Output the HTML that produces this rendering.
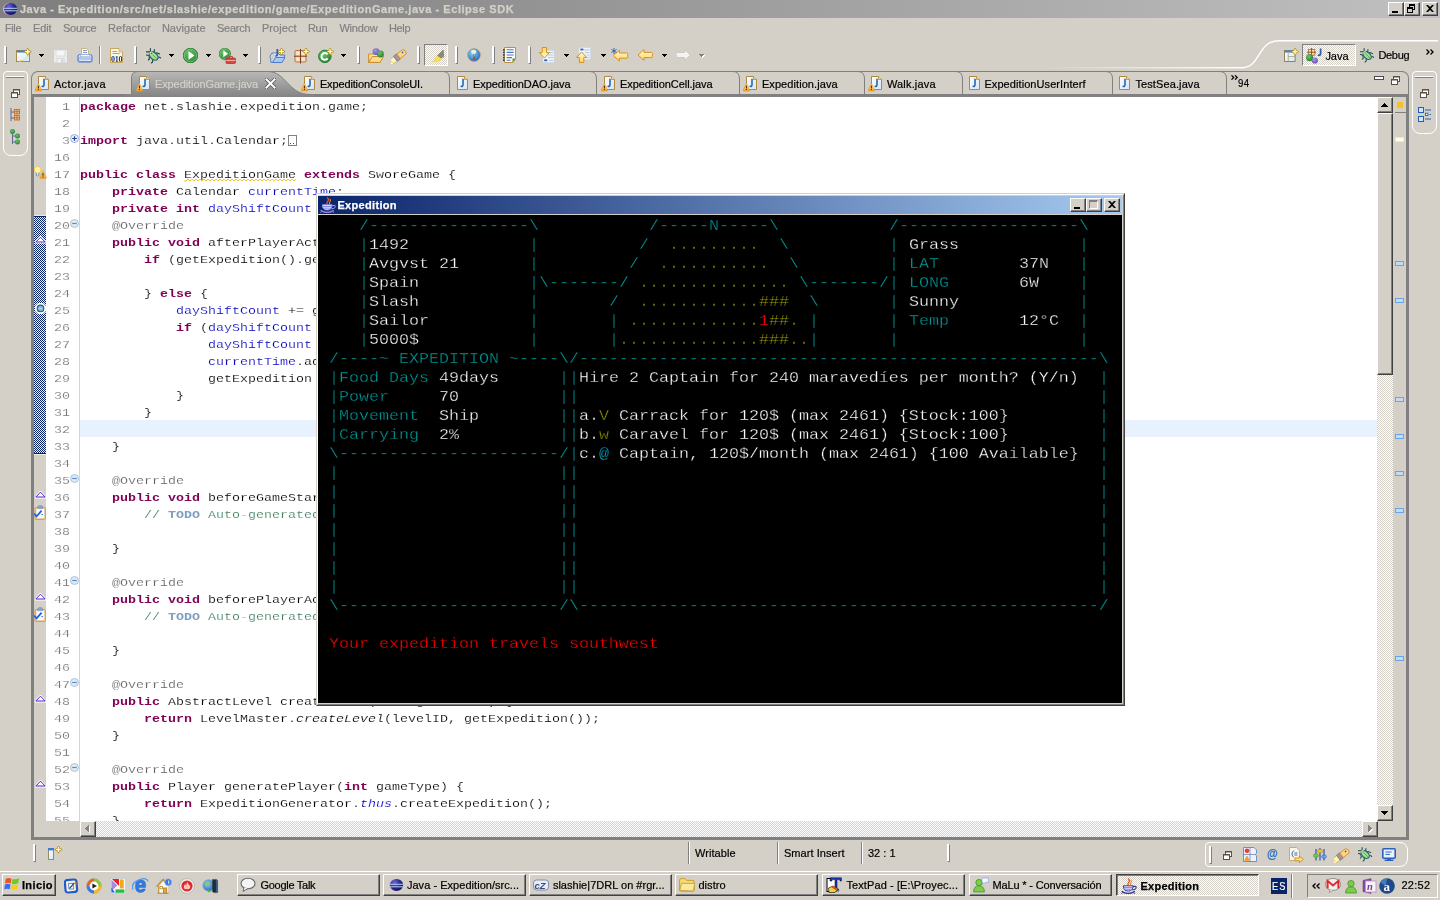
<!DOCTYPE html><html><head><meta charset="utf-8"><title>Eclipse</title><style>
*{box-sizing:border-box;margin:0;padding:0}
html,body{width:1440px;height:900px;overflow:hidden;background:#D4D0C8;}
body{position:relative;font-family:"Liberation Sans",sans-serif;font-size:11px;color:#000;}
.a{position:absolute;}
.t{position:absolute;white-space:pre;line-height:14px;height:14px;font-size:11px;-webkit-text-stroke:.2px;}
.code{position:absolute;white-space:pre;font-family:"Liberation Mono",monospace;font-size:13.333px;line-height:17px;height:17px;color:#000;transform:scaleY(.88);transform-origin:0 12px;-webkit-text-stroke:.18px #fff;}
.kw{color:#7F0055;font-weight:bold;-webkit-text-stroke:0;}
.fld{color:#0000C0;}
.ann{color:#646464;}
.cm{color:#3F7F5F;}
.todo{color:#7F9FBF;font-weight:bold;-webkit-text-stroke:0;}
.it{font-style:italic;}
.ln{position:absolute;white-space:pre;font-family:"Liberation Mono",monospace;font-size:13.333px;line-height:17px;height:17px;color:#787878;text-align:right;width:24px;left:46px;transform:scaleY(.88);transform-origin:0 12px;-webkit-text-stroke:.18px #fff;}
.g{position:absolute;white-space:pre;font-family:"Liberation Mono",monospace;font-size:16.667px;line-height:19px;height:19px;color:#FFFFFF;transform:scaleY(.9);transform-origin:50% 55%;-webkit-text-stroke:.35px #000;}
.te{color:#009A9A;}
.ol{color:#8C8C00;}
.oh{color:#A8A800;}
.rd{color:#FF0000;}
.cy{color:#00D0F0;}
.btn{position:absolute;background:#D4D0C8;border:1px solid;border-color:#fff #404040 #404040 #fff;box-shadow:inset -1px -1px 0 #808080, inset 1px 1px 0 #D4D0C8;}
.tb{position:absolute;height:22px;top:875px;background:#D4D0C8;border:1px solid;border-color:#fff #404040 #404040 #fff;box-shadow:inset -1px -1px 0 #808080;}
</style></head><body><div id="root" style="position:absolute;left:0;top:0;width:1440px;height:900px;overflow:hidden;will-change:transform">
<div class="a" style="left:0;top:0;width:1440px;height:18px;background:linear-gradient(90deg,#808080 0%,#808080 10%,#C0C0C0 100%);"></div>
<div class="t" style="left:19.90px;top:2px;color:#D4D0C8;font-weight:bold;-webkit-text-stroke:.25px;letter-spacing:0.549px;">Java - Expedition/src/net/slashie/expedition/game/ExpeditionGame.java - Eclipse SDK</div>
<svg class="a" style="left:2px;top:1px" width="16" height="16" viewBox="0 0 16 16"><defs><radialGradient id="ec" cx="0.35" cy="0.3" r="0.8"><stop offset="0" stop-color="#6A6AD0"/><stop offset=".5" stop-color="#2A2A90"/><stop offset="1" stop-color="#101050"/></radialGradient></defs><ellipse cx="7.4" cy="8" rx="6.4" ry="6" fill="#E8A8D8"/><ellipse cx="8.6" cy="8" rx="6.6" ry="6.1" fill="url(#ec)"/><rect x="2" y="6.8" width="13.2" height="1" fill="#B8D0F4"/><rect x="2" y="9.3" width="13.2" height="1" fill="#B8D0F4"/></svg>
<div class="btn" style="left:1388px;top:2px;width:16px;height:14px"></div><div class="a" style="left:1392px;top:11px;width:6px;height:2px;background:#000"></div>
<div class="btn" style="left:1404px;top:2px;width:16px;height:14px"></div><div class="a" style="left:1409px;top:4px;width:6px;height:6px;border:1px solid #000;border-top:2px solid #000"></div><div class="a" style="left:1407px;top:7px;width:6px;height:6px;border:1px solid #000;border-top:2px solid #000;background:#D4D0C8"></div>
<div class="btn" style="left:1422px;top:2px;width:16px;height:14px"></div><svg class="a" style="left:1426px;top:5px" width="8" height="7" viewBox="0 0 8 7"><path d="M0 0h2l2 2 2-2h2L5 3.5 8 7H6L4 5 2 7H0l3-3.5z" fill="#000"/></svg>
<div class="t" style="left:4.90px;top:21px;color:#808080;letter-spacing:-0.345px;">File</div>
<div class="t" style="left:32.90px;top:21px;color:#808080;letter-spacing:-0.090px;">Edit</div>
<div class="t" style="left:62.90px;top:21px;color:#808080;letter-spacing:-0.232px;">Source</div>
<div class="t" style="left:107.90px;top:21px;color:#808080;letter-spacing:0.160px;">Refactor</div>
<div class="t" style="left:161.90px;top:21px;color:#808080;letter-spacing:0.040px;">Navigate</div>
<div class="t" style="left:216.90px;top:21px;color:#808080;letter-spacing:-0.232px;">Search</div>
<div class="t" style="left:261.90px;top:21px;color:#808080;letter-spacing:0.075px;">Project</div>
<div class="t" style="left:307.90px;top:21px;color:#808080;letter-spacing:-0.244px;">Run</div>
<div class="t" style="left:339.40px;top:21px;color:#808080;letter-spacing:-0.185px;">Window</div>
<div class="t" style="left:388.90px;top:21px;color:#808080;letter-spacing:-0.308px;">Help</div>
<svg width="0" height="0" style="position:absolute"><defs>
<linearGradient id="gPage" x1="0" y1="0" x2="1" y2="1"><stop offset="0" stop-color="#fff"/><stop offset="1" stop-color="#D5E4F7"/></linearGradient>
<linearGradient id="gWarn" x1="0" y1="0" x2="0" y2="1"><stop offset="0" stop-color="#FFF3B0"/><stop offset="1" stop-color="#F2A024"/></linearGradient>
<radialGradient id="gGreen" cx="0.4" cy="0.35" r="0.75"><stop offset="0" stop-color="#6CC56C"/><stop offset="1" stop-color="#1F7A2A"/></radialGradient>
<radialGradient id="gPurp" cx="0.4" cy="0.35" r="0.75"><stop offset="0" stop-color="#A79CE0"/><stop offset="1" stop-color="#5A48A8"/></radialGradient>
<linearGradient id="gArrow" x1="0" y1="0" x2="0" y2="1"><stop offset="0" stop-color="#FFFBE0"/><stop offset="1" stop-color="#FFD75A"/></linearGradient>
<linearGradient id="gFolder" x1="0" y1="0" x2="0" y2="1"><stop offset="0" stop-color="#FFF0B8"/><stop offset="1" stop-color="#F3C25A"/></linearGradient>
<linearGradient id="gWin" x1="0" y1="0" x2="1" y2="1"><stop offset="0" stop-color="#fff"/><stop offset="1" stop-color="#CFE8FB"/></linearGradient>
<linearGradient id="gPrn" x1="0" y1="0" x2="0" y2="1"><stop offset="0" stop-color="#E6EEFB"/><stop offset="1" stop-color="#7C9EDA"/></linearGradient>
<radialGradient id="gGlobe" cx="0.4" cy="0.35" r="0.75"><stop offset="0" stop-color="#8FD0F5"/><stop offset="1" stop-color="#1E5FB8"/></radialGradient>
<pattern id="dith" width="2" height="2" patternUnits="userSpaceOnUse"><rect width="2" height="2" fill="#fff"/><rect width="1" height="1" fill="#D4D0C8"/><rect x="1" y="1" width="1" height="1" fill="#D4D0C8"/></pattern>
</defs></svg>
<div class="a" style="left:4px;top:46px;width:3px;height:18px;background:#fff;border-left:1px solid #fff;border-right:1px solid #808080;border-top:1px solid #fff;border-bottom:1px solid #808080"></div>
<div class="a" style="left:134px;top:46px;width:3px;height:18px;background:#fff;border-left:1px solid #fff;border-right:1px solid #808080;border-top:1px solid #fff;border-bottom:1px solid #808080"></div>
<div class="a" style="left:258px;top:46px;width:3px;height:18px;background:#fff;border-left:1px solid #fff;border-right:1px solid #808080;border-top:1px solid #fff;border-bottom:1px solid #808080"></div>
<div class="a" style="left:357px;top:46px;width:3px;height:18px;background:#fff;border-left:1px solid #fff;border-right:1px solid #808080;border-top:1px solid #fff;border-bottom:1px solid #808080"></div>
<div class="a" style="left:417px;top:46px;width:3px;height:18px;background:#fff;border-left:1px solid #fff;border-right:1px solid #808080;border-top:1px solid #fff;border-bottom:1px solid #808080"></div>
<div class="a" style="left:455px;top:46px;width:3px;height:18px;background:#fff;border-left:1px solid #fff;border-right:1px solid #808080;border-top:1px solid #fff;border-bottom:1px solid #808080"></div>
<div class="a" style="left:492px;top:46px;width:3px;height:18px;background:#fff;border-left:1px solid #fff;border-right:1px solid #808080;border-top:1px solid #fff;border-bottom:1px solid #808080"></div>
<div class="a" style="left:528px;top:46px;width:3px;height:18px;background:#fff;border-left:1px solid #fff;border-right:1px solid #808080;border-top:1px solid #fff;border-bottom:1px solid #808080"></div>
<div class="a" style="left:99px;top:46px;width:2px;height:18px;border-left:1px solid #808080;border-right:1px solid #fff"></div>
<svg class="a" style="left:16px;top:47.5px" width="16" height="16" viewBox="0 0 16 16" ><rect x=".5" y="2.5" width="13" height="11" fill="url(#gWin)" stroke="#A88A4A"/><rect x="1" y="2.5" width="12" height="2" fill="#3C7CD0"/><path d="M12.5 5 Q12 12 3 13.2" fill="none" stroke="#FFD84A" stroke-width="1"/><g transform="translate(8.2 0.2)"><path d="M3.5 -.2 L4.8 2.2 L7.2 3.5 L4.8 4.8 L3.5 7.2 L2.2 4.8 L-.2 3.5 L2.2 2.2 Z" fill="#D4AA22" stroke="#B08A18" stroke-width=".7"/><path d="M3.5 1 V6 M1 3.5 H6" stroke="#FFFBE0" stroke-width="1.2"/></g></svg>
<svg class="a" style="left:39px;top:54px" width="5" height="3" viewBox="0 0 5 3" shape-rendering="crispEdges"><path d="M0 0h5v1h-1v1h-1v1h-1v-1h-1v-1h-1z" fill="#000"/></svg>
<svg class="a" style="left:53px;top:48.5px" width="15" height="15" viewBox="0 0 15 15" ><rect x=".5" y=".5" width="14" height="13.5" fill="#ECECEC" stroke="#CFCFCF"/><rect x="3" y="1" width="9" height="6" fill="#F6F6F6" stroke="#CFCFCF" stroke-width=".6"/><rect x="4" y="9.5" width="7" height="4.5" fill="#F2F2F2" stroke="#C8C8C8" stroke-width=".6"/><rect x="8" y="10.5" width="2" height="3" fill="#D0D0D0"/></svg>
<svg class="a" style="left:77px;top:48px" width="16" height="15" viewBox="0 0 16 15" ><path d="M4.5 .5 H9.5 L11.5 2.5 V7.5 H4.5 Z" fill="#FFFAE8" stroke="#C8A85A" stroke-width=".8"/><path d="M6 2.5 H10 M6 4.5 H10" stroke="#5A80CC" stroke-width=".8"/><path d="M1 8 Q1 6.6 2.4 6.6 H13.6 Q15 6.6 15 8 V12.6 Q15 14 13.6 14 H2.4 Q1 14 1 12.6 Z" fill="url(#gPrn)" stroke="#4A74C8" stroke-width="1"/><rect x="3.4" y="6.4" width="9.2" height="2.4" fill="#FFFAE8" stroke="#8AA4D8" stroke-width=".6"/><rect x="2" y="11.4" width="12" height="1.6" rx=".6" fill="#D8E4F8"/></svg>
<svg class="a" style="left:110px;top:47.5px" width="13" height="15" viewBox="0 0 13 15" ><path d="M.5 .5 H9 L12.5 4 V14.5 H.5 Z" fill="#FBF6E6" stroke="#C8A85A"/><path d="M9 .5 V4 H12.5" fill="#F0D898" stroke="#C8A85A" stroke-width=".8"/><path d="M2.5 3.5 H7 M2.5 5.5 H9.5" stroke="#6A8CD0" stroke-width=".8"/><text x="1" y="13.8" font-family="Liberation Serif" font-weight="bold" font-size="8" fill="#1E3A78" letter-spacing="-.3">010</text></svg>
<svg class="a" style="left:146px;top:47.5px" width="16" height="16" viewBox="0 0 16 16" ><g stroke="#1A4A3A" stroke-width="1.1" fill="none" stroke-linecap="round"><path d="M4.4 .6 V4 M8.5 1.6 L8.2 3.8 L7 4.4 M.2 3.9 H4 M.2 7 L2 7.2 L3.2 8.2 L3.4 11 L2.4 12 M6.6 11.6 V14 L5.4 15 M10.2 4.9 L12 5.2 L13.6 6 M12.2 9 L13.6 9.2 L14.6 10"/></g><ellipse cx="7.7" cy="8" rx="5" ry="3.3" transform="rotate(42 7.7 8)" fill="#A8DC88" stroke="#1E6A8A" stroke-width="1.3"/><path d="M6.6 6.6 L10.6 10.6" stroke="#58A848" stroke-width="1"/><circle cx="5" cy="5" r="1.5" fill="#E8F8D0"/><circle cx="5.4" cy="5.4" r=".8" fill="#2A7A1E"/></svg>
<svg class="a" style="left:169px;top:54px" width="5" height="3" viewBox="0 0 5 3" shape-rendering="crispEdges"><path d="M0 0h5v1h-1v1h-1v1h-1v-1h-1v-1h-1z" fill="#000"/></svg>
<svg class="a" style="left:183px;top:47.5px" width="15" height="15" viewBox="0 0 15 15" ><circle cx="7.5" cy="7.5" r="7.3" fill="url(#gGreen)" stroke="#1E7A28" stroke-width=".8"/><circle cx="7.5" cy="7.5" r="6.1" fill="none" stroke="#8FD88F" stroke-width=".8" opacity=".8"/><path d="M5.5 3.2 L11.6 7.5 L5.5 11.8 Z" fill="#fff"/></svg>
<svg class="a" style="left:206px;top:54px" width="5" height="3" viewBox="0 0 5 3" shape-rendering="crispEdges"><path d="M0 0h5v1h-1v1h-1v1h-1v-1h-1v-1h-1z" fill="#000"/></svg>
<svg class="a" style="left:219px;top:47.5px" width="17" height="16" viewBox="0 0 17 16" ><g transform="scale(.78)"><circle cx="7.5" cy="7.5" r="7.3" fill="url(#gGreen)" stroke="#1E7A28" stroke-width=".8"/><circle cx="7.5" cy="7.5" r="6.1" fill="none" stroke="#8FD88F" stroke-width=".8" opacity=".8"/><path d="M5.5 3.2 L11.6 7.5 L5.5 11.8 Z" fill="#fff"/></g><rect x="7" y="10" width="9.5" height="5.5" rx="1" fill="#D64A42" stroke="#B02A26" stroke-width=".7"/><path d="M10 10 V8.6 H13.5 V10" fill="none" stroke="#C03A34" stroke-width="1"/><rect x="7" y="12" width="9.5" height="1" fill="#F2A8A0"/></svg>
<svg class="a" style="left:243px;top:54px" width="5" height="3" viewBox="0 0 5 3" shape-rendering="crispEdges"><path d="M0 0h5v1h-1v1h-1v1h-1v-1h-1v-1h-1z" fill="#000"/></svg>
<svg class="a" style="left:269px;top:47.5px" width="17" height="16" viewBox="0 0 17 16" ><path d="M1 8 L3 5 H9 L11 7 H16 L13 14.5 H2 Z" fill="#BFD8F5" stroke="#4A74C8" stroke-width=".9"/><path d="M3.5 14.5 L6.5 9.5 H16 L13 14.5 Z" fill="#A9CBF2" stroke="#4A74C8" stroke-width=".9"/><path d="M2 8 V12 L5 5.5 H9" fill="#FFF4D0" stroke="#D8B060" stroke-width=".6"/><path d="M8.3 1 V6.4 Q8.3 8 6.4 7.8" fill="none" stroke="#2B5FB0" stroke-width="1.7"/><g transform="translate(9 0)"><path d="M3.5 -.2 L4.8 2.2 L7.2 3.5 L4.8 4.8 L3.5 7.2 L2.2 4.8 L-.2 3.5 L2.2 2.2 Z" fill="#D4AA22" stroke="#B08A18" stroke-width=".7"/><path d="M3.5 1 V6 M1 3.5 H6" stroke="#FFFBE0" stroke-width="1.2"/></g></svg>
<svg class="a" style="left:294px;top:47.5px" width="16" height="16" viewBox="0 0 16 16" ><rect x="1" y="2.5" width="11" height="11.5" rx="1" fill="#F3D5A8" stroke="#B87848" stroke-width="1"/><path d="M6.5 1 V15.5 M0 8.2 H13" stroke="#7A3A20" stroke-width="1"/><rect x="2.4" y="4" width="3" height="3" fill="#FBE8C8"/><rect x="7.8" y="4" width="3" height="3" fill="#FBE8C8"/><rect x="2.4" y="9.6" width="3" height="3" fill="#FBE8C8"/><rect x="7.8" y="9.6" width="3" height="3" fill="#FBE8C8"/><g transform="translate(8.5 0)"><path d="M3.5 -.2 L4.8 2.2 L7.2 3.5 L4.8 4.8 L3.5 7.2 L2.2 4.8 L-.2 3.5 L2.2 2.2 Z" fill="#D4AA22" stroke="#B08A18" stroke-width=".7"/><path d="M3.5 1 V6 M1 3.5 H6" stroke="#FFFBE0" stroke-width="1.2"/></g></svg>
<svg class="a" style="left:318px;top:47.5px" width="16" height="16" viewBox="0 0 16 16" ><circle cx="6.8" cy="8.4" r="6.3" fill="url(#gGreen)" stroke="#1E7A28" stroke-width=".8"/><path d="M9.6 6.4 A3.4 3.4 0 1 0 9.6 10.4" fill="none" stroke="#fff" stroke-width="2"/><g transform="translate(8.6 0)"><path d="M3.5 -.2 L4.8 2.2 L7.2 3.5 L4.8 4.8 L3.5 7.2 L2.2 4.8 L-.2 3.5 L2.2 2.2 Z" fill="#D4AA22" stroke="#B08A18" stroke-width=".7"/><path d="M3.5 1 V6 M1 3.5 H6" stroke="#FFFBE0" stroke-width="1.2"/></g></svg>
<svg class="a" style="left:341px;top:54px" width="5" height="3" viewBox="0 0 5 3" shape-rendering="crispEdges"><path d="M0 0h5v1h-1v1h-1v1h-1v-1h-1v-1h-1z" fill="#000"/></svg>
<svg class="a" style="left:368px;top:47.5px" width="16" height="15" viewBox="0 0 16 15" ><path d="M.6 6 H6 L7.5 4.5 H12.5 V6.5 H15.5 L12 14.5 H.6 Z" fill="url(#gFolder)" stroke="#C8862A" stroke-width=".9"/><path d="M.8 14.3 L4.5 8.5 H15.6 L12 14.5 Z" fill="#FBDD8A" stroke="#C8862A" stroke-width=".9"/><circle cx="8" cy="3.6" r="3.4" fill="url(#gPurp)"/><circle cx="12.4" cy="6" r="3.4" fill="url(#gGreen)"/></svg>
<svg class="a" style="left:391px;top:47.5px" width="16" height="16" viewBox="0 0 16 16" ><g transform="rotate(-38 8 8)"><rect x="-1.5" y="5.2" width="5" height="5.6" fill="#FFF6B0" stroke="#C8A03A" stroke-width=".6"/><path d="M-1.5 5.2 L-3 4.2 V11.8 L-1.5 10.8 Z" fill="#FFFDE8"/><rect x="3.5" y="4.8" width="4" height="6.4" fill="#9C98A8" stroke="#6E6A7A" stroke-width=".6"/><path d="M7.5 5.2 H15 Q17.5 8 15 10.8 H7.5 Z" fill="#F9D48A" stroke="#D8922A" stroke-width=".9"/><circle cx="13" cy="7.4" r=".8" fill="#2B4FA0"/></g></svg>
<div class="a" style="left:424px;top:44px;width:24px;height:22px;border:1px solid;border-color:#808080 #fff #fff #808080;background:#EAE8E4;background-image:repeating-conic-gradient(#fff 0 25%,#D4D0C8 0 50%);background-size:2px 2px"></div>
<svg class="a" style="left:428px;top:48px" width="16" height="16" viewBox="0 0 16 16" ><path d="M3 13.5 H9" stroke="#F7E24A" stroke-width="1.4"/><path d="M6 12.5 L9.5 7.5 L13.2 10 L11.5 13 Z" fill="#F7E24A" stroke="#E8C82A" stroke-width=".5"/><path d="M9.5 7.5 L15.2 2 L15.8 8.6 L13.2 10 Z" fill="#8E8A7A" stroke="#6E6A5A" stroke-width=".5"/></svg>
<svg class="a" style="left:467px;top:48px" width="14" height="14" viewBox="0 0 14 14" ><circle cx="7" cy="7" r="6.4" fill="url(#gGlobe)" stroke="#B89A4A" stroke-width=".5"/><path d="M4 2.5 Q7 1 9 2.6 Q10 5 7.8 6 Q5 6.4 4.4 4.4 Z" fill="#F4F4E0" opacity=".9"/><path d="M6 5 L7.5 8.6 L9 6.5 L8.4 9.8 H6.5 Z" fill="#5A9A3A"/><circle cx="7" cy="10.4" r=".9" fill="#C82020"/></svg>
<svg class="a" style="left:503px;top:47px" width="13" height="16" viewBox="0 0 13 16" ><path d="M1.5 .5 H12.5 V12 L10 15.5 H1.5 Z" fill="#FEFCF0" stroke="#B8923C" stroke-width="1"/><path d="M12.5 11.5 L9.5 15.5 V11.5 Z" fill="#3C9A4A"/><g fill="#1E3A78"><rect x="0" y="2" width="1.6" height="1.6"/><rect x="0" y="4.6" width="1.6" height="1.6"/><rect x="0" y="7.2" width="1.6" height="1.6"/><rect x="0" y="9.8" width="1.6" height="1.6"/><rect x="0" y="12.4" width="1.6" height="1.6"/></g><g stroke="#4A78C8" stroke-width="1.1"><path d="M3.6 2.8 H10.6 M3.6 5.4 H10.6 M3.6 8 H10.6 M3.6 10.6 H9 M3.6 13.2 H7.6"/></g></svg>
<svg class="a" style="left:539px;top:47px" width="16" height="16" viewBox="0 0 16 16" ><rect x="4" y="3.5" width="11" height="12" fill="#EEF3FB" stroke="#C8D4E8" stroke-width=".6"/><path d="M9 5.5 H14 M9 8 H14 M9 10.5 H14" stroke="#B8C8E0" stroke-width="1"/><rect x="5.2" y="12.4" width="3" height="1.8" fill="#2B5FB0"/><path d="M10 13.4 H14" stroke="#B8C8E0"/><g transform="translate(0.4 11) scale(1 -1)"><path d="M5 0 L10 5.4 H7.2 V10.5 H2.8 V5.4 H0 Z" fill="url(#gArrow)" stroke="#D8901E" stroke-width="1" stroke-linejoin="round"/></g></svg>
<svg class="a" style="left:564px;top:54px" width="5" height="3" viewBox="0 0 5 3" shape-rendering="crispEdges"><path d="M0 0h5v1h-1v1h-1v1h-1v-1h-1v-1h-1z" fill="#000"/></svg>
<svg class="a" style="left:576px;top:47px" width="16" height="16" viewBox="0 0 16 16" ><rect x="3" y=".5" width="11.5" height="12" fill="#EEF3FB" stroke="#C8D4E8" stroke-width=".6"/><path d="M8 3 H13.5 M9 5.5 H13.5 M10.5 8 H13.5 M10.5 10.5 H13.5" stroke="#B8C8E0" stroke-width="1"/><rect x="4.4" y="1.6" width="3" height="1.8" fill="#2B5FB0"/><g transform="translate(0.6 5)"><path d="M5 0 L10 5.4 H7.2 V10.5 H2.8 V5.4 H0 Z" fill="url(#gArrow)" stroke="#D8901E" stroke-width="1" stroke-linejoin="round"/></g></svg>
<svg class="a" style="left:601px;top:54px" width="5" height="3" viewBox="0 0 5 3" shape-rendering="crispEdges"><path d="M0 0h5v1h-1v1h-1v1h-1v-1h-1v-1h-1z" fill="#000"/></svg>
<svg class="a" style="left:611px;top:47.5px" width="18" height="14" viewBox="0 0 18 14" ><g transform="translate(2.4 1.6)"><path d="M0 6 L6 .6 V3.4 H13.4 Q14.4 3.4 14.4 4.4 V7.6 Q14.4 8.6 13.4 8.6 H6 V11.4 Z" fill="url(#gArrow)" stroke="#D8901E" stroke-width="1" stroke-linejoin="round"/></g><path d="M3 0 V6 M.4 1.5 L5.6 4.5 M.4 4.5 L5.6 1.5" stroke="#2B5FB0" stroke-width=".9"/></svg>
<svg class="a" style="left:638px;top:49px" width="15" height="12" viewBox="0 0 15 12" ><path d="M0 6 L6 .6 V3.4 H13.4 Q14.4 3.4 14.4 4.4 V7.6 Q14.4 8.6 13.4 8.6 H6 V11.4 Z" fill="url(#gArrow)" stroke="#D8901E" stroke-width="1" stroke-linejoin="round"/></svg>
<svg class="a" style="left:662px;top:54px" width="5" height="3" viewBox="0 0 5 3" shape-rendering="crispEdges"><path d="M0 0h5v1h-1v1h-1v1h-1v-1h-1v-1h-1z" fill="#000"/></svg>
<svg class="a" style="left:676px;top:49px" width="15" height="12" viewBox="0 0 15 12" ><g transform="translate(14.5 0) scale(-1 1)"><path d="M0 6 L6 .6 V3.4 H13.4 Q14.4 3.4 14.4 4.4 V7.6 Q14.4 8.6 13.4 8.6 H6 V11.4 Z" fill="#F4F3F0" stroke="#C8C6C0" stroke-width="1" stroke-linejoin="round"/></g></svg>
<svg class="a" style="left:700px;top:55px" width="5" height="3" viewBox="0 0 5 3" shape-rendering="crispEdges"><path d="M0 0h5v1h-1v1h-1v1h-1v-1h-1v-1h-1z" fill="#fff"/></svg>
<svg class="a" style="left:699px;top:54px" width="5" height="3" viewBox="0 0 5 3" shape-rendering="crispEdges"><path d="M0 0h5v1h-1v1h-1v1h-1v-1h-1v-1h-1z" fill="#808080"/></svg>
<svg class="a" style="left:1040px;top:38px" width="400" height="32" viewBox="0 0 400 32"><defs><linearGradient id="pf" x1="0" x2="1"><stop offset="0" stop-color="#D4D0C8"/><stop offset="1" stop-color="#fff"/></linearGradient></defs><rect x="0" y="29" width="203" height="1.4" fill="url(#pf)"/><path d="M202 29.7 C221 29.7 217 2.7 239 2.7 H398" fill="none" stroke="#fff" stroke-width="1.4"/></svg>
<svg class="a" style="left:1284px;top:48px" width="15" height="15" viewBox="0 0 15 15" ><rect x=".5" y="2.5" width="10.6" height="11" fill="url(#gWin)" stroke="#8A7A4A" stroke-width=".9"/><rect x=".9" y="2.6" width="9.8" height="2" fill="#4A84D8"/><path d="M4.2 5 V13.4 M4.2 8.6 H11" stroke="#A89A6A" stroke-width=".8"/><g transform="translate(7.6 0.2)"><path d="M3.5 -.2 L4.8 2.2 L7.2 3.5 L4.8 4.8 L3.5 7.2 L2.2 4.8 L-.2 3.5 L2.2 2.2 Z" fill="#D4AA22" stroke="#B08A18" stroke-width=".7"/><path d="M3.5 1 V6 M1 3.5 H6" stroke="#FFFBE0" stroke-width="1.2"/></g></svg>
<div class="a" style="left:1302px;top:44px;width:54px;height:22px;border:1px solid;border-color:#808080 #fff #fff #808080;background:#EAE8E4;background-image:repeating-conic-gradient(#fff 0 25%,#D4D0C8 0 50%);background-size:2px 2px"></div>
<svg class="a" style="left:1305px;top:48px" width="18" height="16" viewBox="0 0 18 16" ><rect x="3.4" y="1.4" width="6.4" height="5.8" fill="#FBE3B0" stroke="#B8704A" stroke-width=".9"/><path d="M6.6 0 V8 M2.2 4.2 H11" stroke="#9A4A28" stroke-width="1"/><path d="M15.6 .4 V5.6 Q15.6 7.6 13.4 7.2 L12.8 7" fill="none" stroke="#2B66AC" stroke-width="1.8"/><circle cx="4.6" cy="9.6" r="3.6" fill="url(#gGreen)"/><circle cx="9.8" cy="12.5" r="3.1" fill="url(#gPurp)"/></svg>
<div class="t" style="left:1325.40px;top:49px;color:#000;letter-spacing:-0.017px;">Java</div>
<svg class="a" style="left:1360px;top:48px" width="15" height="15" viewBox="0 0 16 16" ><g stroke="#1A4A3A" stroke-width="1.1" fill="none" stroke-linecap="round"><path d="M4.4 .6 V4 M8.5 1.6 L8.2 3.8 L7 4.4 M.2 3.9 H4 M.2 7 L2 7.2 L3.2 8.2 L3.4 11 L2.4 12 M6.6 11.6 V14 L5.4 15 M10.2 4.9 L12 5.2 L13.6 6 M12.2 9 L13.6 9.2 L14.6 10"/></g><ellipse cx="7.7" cy="8" rx="5" ry="3.3" transform="rotate(42 7.7 8)" fill="#A8DC88" stroke="#1E6A8A" stroke-width="1.3"/><path d="M6.6 6.6 L10.6 10.6" stroke="#58A848" stroke-width="1"/><circle cx="5" cy="5" r="1.5" fill="#E8F8D0"/><circle cx="5.4" cy="5.4" r=".8" fill="#2A7A1E"/></svg>
<div class="t" style="left:1378.40px;top:48px;color:#000;letter-spacing:-0.305px;">Debug</div>
<svg class="a" style="left:1426px;top:49px" width="9" height="6" viewBox="0 0 9 6"><path d="M.5 .5 L3 3 L.5 5.5 M4.5 .5 L7 3 L4.5 5.5" fill="none" stroke="#000" stroke-width="1.3"/></svg>
<div class="a" style="left:3px;top:71px;width:25px;height:85px;border:1.5px solid #fff;border-radius:4px 4px 8px 8px"></div>
<div class="a" style="left:6px;top:76px;width:18px;height:2px;border-top:1px solid #fff;border-bottom:1px solid #808080"></div>
<svg class="a" style="left:11px;top:89px" width="9" height="9" viewBox="0 0 9 9" ><rect x="2.5" y=".5" width="6" height="5" fill="#fff" stroke="#5A5048" stroke-width="1"/><rect x="2.5" y=".5" width="6" height="1" fill="#5A5048"/><rect x=".5" y="3.5" width="6" height="5" fill="#fff" stroke="#5A5048" stroke-width="1"/><rect x=".5" y="3.5" width="6" height="1" fill="#5A5048"/></svg>
<svg class="a" style="left:10px;top:108px" width="10" height="14" viewBox="0 0 10 14" ><path d="M1 0 V13 M1 4 H4 M1 10 H4" stroke="#5A6A9A" stroke-width="1" fill="none"/><g fill="#F5C88A" stroke="#B8601E" stroke-width=".8"><rect x="4.5" y="1.5" width="5" height="4.4"/><rect x="4.5" y="7.6" width="5" height="4.4"/></g><path d="M7 1.5 V5.9 M4.5 3.7 H9.5 M7 7.6 V12 M4.5 9.8 H9.5" stroke="#B8601E" stroke-width=".8"/></svg>
<svg class="a" style="left:10px;top:129px" width="10" height="16" viewBox="0 0 10 16" ><path d="M2.5 3 V15 M2.5 7 H6 M2.5 13 H6" stroke="#5A6A9A" stroke-width="1" fill="none"/><circle cx="2.5" cy="2.5" r="2.3" fill="url(#gGreen)" stroke="#2E8A3A" stroke-width=".5"/><circle cx="7.5" cy="7" r="2.3" fill="url(#gGreen)" stroke="#2E8A3A" stroke-width=".5"/><circle cx="7.5" cy="13" r="2.3" fill="url(#gGreen)" stroke="#2E8A3A" stroke-width=".5"/></svg>
<div class="a" style="left:1412px;top:71px;width:25px;height:63px;border:1.5px solid #fff;border-radius:4px 4px 8px 8px"></div>
<div class="a" style="left:1415px;top:76px;width:18px;height:2px;border-top:1px solid #fff;border-bottom:1px solid #808080"></div>
<svg class="a" style="left:1420px;top:89px" width="9" height="9" viewBox="0 0 9 9" ><rect x="2.5" y=".5" width="6" height="5" fill="#fff" stroke="#5A5048" stroke-width="1"/><rect x="2.5" y=".5" width="6" height="1" fill="#5A5048"/><rect x=".5" y="3.5" width="6" height="5" fill="#fff" stroke="#5A5048" stroke-width="1"/><rect x=".5" y="3.5" width="6" height="1" fill="#5A5048"/></svg>
<svg class="a" style="left:1418px;top:107px" width="14" height="15" viewBox="0 0 14 15" ><g fill="#CFE6FB" stroke="#1E62B8" stroke-width="1"><rect x=".5" y=".5" width="5" height="5"/><rect x=".5" y="9.5" width="5" height="5"/></g><path d="M7 3 H13 M7 12 H13 M11.5 7.5 H13" stroke="#1E62B8" stroke-width="1"/><rect x="7.5" y="6.2" width="2.4" height="2.4" fill="#fff" stroke="#1E62B8" stroke-width=".9"/></svg>
<div class="a" style="left:31px;top:71px;width:1378px;height:26px;border:1px solid #808080;border-bottom:none;border-radius:7px 7px 0 0;background:#D4D0C8"></div>
<div class="a" style="left:31px;top:94px;width:1378px;height:746px;background:#808080"></div>
<div class="a" style="left:34px;top:97px;width:1372px;height:740px;background:#fff"></div>
<div class="a" style="left:34px;top:97px;width:12px;height:724px;background:#D4D0C8"></div>
<div class="a" style="left:34px;top:215px;width:12px;height:240px;background:#F0ECE0"></div>
<div class="a" style="left:34px;top:216px;width:12px;height:238px;background:#0A246A"></div>
<div class="a" style="left:34px;top:217px;width:12px;height:236px;background:#0A246A;background-image:repeating-conic-gradient(#0A246A 0 25%,#F4F0E8 0 50%);background-size:2px 2px"></div>
<div class="a" style="left:79px;top:97px;width:1px;height:724px;background:#D8D4CC"></div>
<div class="a" style="left:80px;top:420px;width:1297px;height:17px;background:#E8F2FE"></div>
<div class="ln" style="top:98px">1</div>
<div class="code" style="left:80px;top:98px"><span class="kw">package</span> net.slashie.expedition.game;</div>
<div class="ln" style="top:115px">2</div>
<div class="ln" style="top:132px">3</div>
<div class="code" style="left:80px;top:132px"><span class="kw">import</span> java.util.Calendar;</div>
<div class="ln" style="top:149px">16</div>
<div class="ln" style="top:166px">17</div>
<div class="code" style="left:80px;top:166px"><span class="kw">public</span> <span class="kw">class</span> <span class="wv">ExpeditionGame</span> <span class="kw">extends</span> SworeGame {</div>
<div class="ln" style="top:183px">18</div>
<div class="code" style="left:80px;top:183px">    <span class="kw">private</span> Calendar <span class="fld">currentTime</span>;</div>
<div class="ln" style="top:200px">19</div>
<div class="code" style="left:80px;top:200px">    <span class="kw">private</span> <span class="kw">int</span> <span class="fld">dayShiftCount</span> = 0;</div>
<div class="ln" style="top:217px">20</div>
<div class="code" style="left:80px;top:217px">    <span class="ann">@Override</span></div>
<div class="ln" style="top:234px">21</div>
<div class="code" style="left:80px;top:234px">    <span class="kw">public</span> <span class="kw">void</span> afterPlayerAction() {</div>
<div class="ln" style="top:251px">22</div>
<div class="code" style="left:80px;top:251px">        <span class="kw">if</span> (getExpedition().getMovementMode() == MovementMode.<span class="it"><span class="fld">SHIP</span></span>) {</div>
<div class="ln" style="top:268px">23</div>
<div class="ln" style="top:285px">24</div>
<div class="code" style="left:80px;top:285px">        } <span class="kw">else</span> {</div>
<div class="ln" style="top:302px">25</div>
<div class="code" style="left:80px;top:302px">            <span class="fld">dayShiftCount</span> += getExpedition().getTimeCost();</div>
<div class="ln" style="top:319px">26</div>
<div class="code" style="left:80px;top:319px">            <span class="kw">if</span> (<span class="fld">dayShiftCount</span> &gt; 200) {</div>
<div class="ln" style="top:336px">27</div>
<div class="code" style="left:80px;top:336px">                <span class="fld">dayShiftCount</span> = 0;</div>
<div class="ln" style="top:353px">28</div>
<div class="code" style="left:80px;top:353px">                <span class="fld">currentTime</span>.add(Calendar.<span class="it"><span class="fld">DATE</span></span>, 1);</div>
<div class="ln" style="top:370px">29</div>
<div class="code" style="left:80px;top:370px">                getExpedition ().dayShift();</div>
<div class="ln" style="top:387px">30</div>
<div class="code" style="left:80px;top:387px">            }</div>
<div class="ln" style="top:404px">31</div>
<div class="code" style="left:80px;top:404px">        }</div>
<div class="ln" style="top:421px">32</div>
<div class="ln" style="top:438px">33</div>
<div class="code" style="left:80px;top:438px">    }</div>
<div class="ln" style="top:455px">34</div>
<div class="ln" style="top:472px">35</div>
<div class="code" style="left:80px;top:472px">    <span class="ann">@Override</span></div>
<div class="ln" style="top:489px">36</div>
<div class="code" style="left:80px;top:489px">    <span class="kw">public</span> <span class="kw">void</span> beforeGameStart() {</div>
<div class="ln" style="top:506px">37</div>
<div class="code" style="left:80px;top:506px">        <span class="cm">// </span><span class="todo">TODO</span><span class="cm"> Auto-generated method stub</span></div>
<div class="ln" style="top:523px">38</div>
<div class="ln" style="top:540px">39</div>
<div class="code" style="left:80px;top:540px">    }</div>
<div class="ln" style="top:557px">40</div>
<div class="ln" style="top:574px">41</div>
<div class="code" style="left:80px;top:574px">    <span class="ann">@Override</span></div>
<div class="ln" style="top:591px">42</div>
<div class="code" style="left:80px;top:591px">    <span class="kw">public</span> <span class="kw">void</span> beforePlayerAction() {</div>
<div class="ln" style="top:608px">43</div>
<div class="code" style="left:80px;top:608px">        <span class="cm">// </span><span class="todo">TODO</span><span class="cm"> Auto-generated method stub</span></div>
<div class="ln" style="top:625px">44</div>
<div class="ln" style="top:642px">45</div>
<div class="code" style="left:80px;top:642px">    }</div>
<div class="ln" style="top:659px">46</div>
<div class="ln" style="top:676px">47</div>
<div class="code" style="left:80px;top:676px">    <span class="ann">@Override</span></div>
<div class="ln" style="top:693px">48</div>
<div class="code" style="left:80px;top:693px">    <span class="kw">public</span> AbstractLevel createLevel(String levelID) {</div>
<div class="ln" style="top:710px">49</div>
<div class="code" style="left:80px;top:710px">        <span class="kw">return</span> LevelMaster.<span class="it">createLevel</span>(levelID, getExpedition());</div>
<div class="ln" style="top:727px">50</div>
<div class="code" style="left:80px;top:727px">    }</div>
<div class="ln" style="top:744px">51</div>
<div class="ln" style="top:761px">52</div>
<div class="code" style="left:80px;top:761px">    <span class="ann">@Override</span></div>
<div class="ln" style="top:778px">53</div>
<div class="code" style="left:80px;top:778px">    <span class="kw">public</span> Player generatePlayer(<span class="kw">int</span> gameType) {</div>
<div class="ln" style="top:795px">54</div>
<div class="code" style="left:80px;top:795px">        <span class="kw">return</span> ExpeditionGenerator.<span class="it"><span class="fld">thus</span></span>.createExpedition();</div>
<div class="a" style="left:46px;top:811px;width:1331px;height:10px;overflow:hidden"><div class="ln" style="left:0;top:1px">55</div><div class="code" style="left:34px;top:1px">    }</div></div>
<svg class="a" style="left:34.5px;top:236px" width="11" height="8" viewBox="0 0 11 8"><path d="M5.5 1 L10.6 6.4 H.4 Z" fill="#fff" stroke="#fff" stroke-width="2" stroke-linejoin="round"/><path d="M5.5 1.2 L10.2 6 H.8 Z" fill="#fff" stroke="#4A22C8" stroke-width="1"/></svg>
<svg class="a" style="left:34.5px;top:491px" width="11" height="8" viewBox="0 0 11 8"><path d="M5.5 1 L10.6 6.4 H.4 Z" fill="#fff" stroke="#fff" stroke-width="2" stroke-linejoin="round"/><path d="M5.5 1.2 L10.2 6 H.8 Z" fill="#fff" stroke="#4A22C8" stroke-width="1"/></svg>
<svg class="a" style="left:34.5px;top:593px" width="11" height="8" viewBox="0 0 11 8"><path d="M5.5 1 L10.6 6.4 H.4 Z" fill="#fff" stroke="#fff" stroke-width="2" stroke-linejoin="round"/><path d="M5.5 1.2 L10.2 6 H.8 Z" fill="#fff" stroke="#4A22C8" stroke-width="1"/></svg>
<svg class="a" style="left:34.5px;top:695px" width="11" height="8" viewBox="0 0 11 8"><path d="M5.5 1 L10.6 6.4 H.4 Z" fill="#fff" stroke="#fff" stroke-width="2" stroke-linejoin="round"/><path d="M5.5 1.2 L10.2 6 H.8 Z" fill="#fff" stroke="#4A22C8" stroke-width="1"/></svg>
<svg class="a" style="left:34.5px;top:780px" width="11" height="8" viewBox="0 0 11 8"><path d="M5.5 1 L10.6 6.4 H.4 Z" fill="#fff" stroke="#fff" stroke-width="2" stroke-linejoin="round"/><path d="M5.5 1.2 L10.2 6 H.8 Z" fill="#fff" stroke="#4A22C8" stroke-width="1"/></svg>
<svg class="a" style="left:34px;top:505px" width="12" height="15" viewBox="0 0 12 15"><rect x="1" y="2.5" width="10.5" height="12" rx="1" fill="#E8C088" stroke="#D8A058" stroke-width="1"/><rect x="2.4" y="3.6" width="7.8" height="9.6" fill="#F8FAFF"/><path d="M3.6 2.6 Q3.6 .4 6.2 .4 Q8.8 .4 8.8 2.6 V3.6 H3.6 Z" fill="#8AA4CC" stroke="#6A86B8" stroke-width=".5"/><path d="M.2 8.6 L2.6 11.4 L7.6 5.6" fill="none" stroke="#1466E8" stroke-width="1.7"/><path d="M7.4 9.6 H9" stroke="#4A6AB8" stroke-width="1"/></svg>
<svg class="a" style="left:34px;top:607px" width="12" height="15" viewBox="0 0 12 15"><rect x="1" y="2.5" width="10.5" height="12" rx="1" fill="#E8C088" stroke="#D8A058" stroke-width="1"/><rect x="2.4" y="3.6" width="7.8" height="9.6" fill="#F8FAFF"/><path d="M3.6 2.6 Q3.6 .4 6.2 .4 Q8.8 .4 8.8 2.6 V3.6 H3.6 Z" fill="#8AA4CC" stroke="#6A86B8" stroke-width=".5"/><path d="M.2 8.6 L2.6 11.4 L7.6 5.6" fill="none" stroke="#1466E8" stroke-width="1.7"/><path d="M7.4 9.6 H9" stroke="#4A6AB8" stroke-width="1"/></svg>
<svg class="a" style="left:70px;top:219px" width="9" height="9" viewBox="0 0 9 9"><circle cx="4.5" cy="4.5" r="4" fill="#DCE8F2" stroke="#A8C0D8" stroke-width=".9"/><path d="M2.2 4.5 H6.8" stroke="#5A8AC8" stroke-width="1.1"/></svg>
<svg class="a" style="left:70px;top:474px" width="9" height="9" viewBox="0 0 9 9"><circle cx="4.5" cy="4.5" r="4" fill="#DCE8F2" stroke="#A8C0D8" stroke-width=".9"/><path d="M2.2 4.5 H6.8" stroke="#5A8AC8" stroke-width="1.1"/></svg>
<svg class="a" style="left:70px;top:576px" width="9" height="9" viewBox="0 0 9 9"><circle cx="4.5" cy="4.5" r="4" fill="#DCE8F2" stroke="#A8C0D8" stroke-width=".9"/><path d="M2.2 4.5 H6.8" stroke="#5A8AC8" stroke-width="1.1"/></svg>
<svg class="a" style="left:70px;top:678px" width="9" height="9" viewBox="0 0 9 9"><circle cx="4.5" cy="4.5" r="4" fill="#DCE8F2" stroke="#A8C0D8" stroke-width=".9"/><path d="M2.2 4.5 H6.8" stroke="#5A8AC8" stroke-width="1.1"/></svg>
<svg class="a" style="left:70px;top:763px" width="9" height="9" viewBox="0 0 9 9"><circle cx="4.5" cy="4.5" r="4" fill="#DCE8F2" stroke="#A8C0D8" stroke-width=".9"/><path d="M2.2 4.5 H6.8" stroke="#5A8AC8" stroke-width="1.1"/></svg>
<svg class="a" style="left:70px;top:134px" width="9" height="9" viewBox="0 0 9 9"><circle cx="4.5" cy="4.5" r="4" fill="#EAF1F8" stroke="#8AA8CC" stroke-width=".9"/><path d="M2.2 4.5 H6.8 M4.5 2.2 V6.8" stroke="#1E3E9A" stroke-width="1.1"/></svg>
<div class="a" style="left:288px;top:135px;width:9px;height:11px;border:1px solid #808080"></div>
<div class="a" style="left:290px;top:143px;width:1px;height:1px;background:#404040;box-shadow:3px 0 0 #404040"></div>
<svg class="a" style="left:34px;top:302px" width="13" height="13" viewBox="0 0 13 13"><path d="M4 1 H9 L12 4 V9 L9 12 H4 L1 9 V4 Z" fill="#FFFCF0"/><circle cx="6.5" cy="6.4" r="3.3" fill="#7EBCE4" stroke="#1E5E8E" stroke-width="1.1"/><path d="M4.8 6.4 H8.2" stroke="#B8DCF2" stroke-width="1"/></svg>
<svg class="a" style="left:34px;top:166px" width="13" height="13" viewBox="0 0 13 13"><circle cx="3.6" cy="3.8" r="3.4" fill="#FFF3B0" stroke="#E8C04A" stroke-width=".8"/><path d="M2.4 7 V9.4 Q3.6 10.6 4.8 9.4 V7" fill="#E8F0FA" stroke="#5A7AB8" stroke-width=".8"/><g transform="translate(5.6 -2.6)"><path d="M3.4 7.4 L6.6 14.2 Q6.8 15 6 15 H0.8 Q0 15 0.2 14.2 Z" fill="url(#gWarn)" stroke="#E8961E" stroke-width=".7"/><rect x="2.9" y="9.6" width="1" height="2.8" fill="#3a2200"/><rect x="2.9" y="13" width="1" height="1" fill="#3a2200"/></g></svg>
<svg class="a" style="left:184px;top:179px" width="113" height="3" viewBox="0 0 113 3"><path d="M0 2 L2 2 L4 0 L6 2 L8 0 L10 2 L12 0 L14 2 L16 0 L18 2 L20 0 L22 2 L24 0 L26 2 L28 0 L30 2 L32 0 L34 2 L36 0 L38 2 L40 0 L42 2 L44 0 L46 2 L48 0 L50 2 L52 0 L54 2 L56 0 L58 2 L60 0 L62 2 L64 0 L66 2 L68 0 L70 2 L72 0 L74 2 L76 0 L78 2 L80 0 L82 2 L84 0 L86 2 L88 0 L90 2 L92 0 L94 2 L96 0 L98 2 L100 0 L102 2 L104 0 L106 2 L108 0 L110 2 L112 0 " fill="none" stroke="#F4C82D" stroke-width="1"/></svg>
<svg class="a" style="left:125px;top:71px" width="190" height="26" viewBox="0 0 190 26"><defs><linearGradient id="at" x1="0" y1="0" x2="0" y2="1"><stop offset="0" stop-color="#B9B9B9"/><stop offset="1" stop-color="#838383"/></linearGradient></defs><path d="M0 26 V23.5 H6.5 V7 Q6.5 .5 13 .5 H143 C161 .5 163 23.5 185 23.5 H190 V26 Z" fill="url(#at)"/><path d="M6.5 23.5 V7 Q6.5 .5 13 .5 H143 C161 .5 163 23.5 185 23.5" fill="none" stroke="#808080" stroke-width="1"/></svg>
<svg class="a" style="left:443px;top:71px" width="8" height="23" viewBox="0 0 8 23"><path d="M0 .5 Q6.5 .5 6.5 8 V23" fill="none" stroke="#808080" stroke-width="1"/></svg>
<svg class="a" style="left:590px;top:71px" width="8" height="23" viewBox="0 0 8 23"><path d="M0 .5 Q6.5 .5 6.5 8 V23" fill="none" stroke="#808080" stroke-width="1"/></svg>
<svg class="a" style="left:733px;top:71px" width="8" height="23" viewBox="0 0 8 23"><path d="M0 .5 Q6.5 .5 6.5 8 V23" fill="none" stroke="#808080" stroke-width="1"/></svg>
<svg class="a" style="left:858px;top:71px" width="8" height="23" viewBox="0 0 8 23"><path d="M0 .5 Q6.5 .5 6.5 8 V23" fill="none" stroke="#808080" stroke-width="1"/></svg>
<svg class="a" style="left:956px;top:71px" width="8" height="23" viewBox="0 0 8 23"><path d="M0 .5 Q6.5 .5 6.5 8 V23" fill="none" stroke="#808080" stroke-width="1"/></svg>
<svg class="a" style="left:1106px;top:71px" width="8" height="23" viewBox="0 0 8 23"><path d="M0 .5 Q6.5 .5 6.5 8 V23" fill="none" stroke="#808080" stroke-width="1"/></svg>
<svg class="a" style="left:1220px;top:71px" width="8" height="23" viewBox="0 0 8 23"><path d="M0 .5 Q6.5 .5 6.5 8 V23" fill="none" stroke="#808080" stroke-width="1"/></svg>
<svg class="a" style="left:35px;top:76px" width="15" height="16" viewBox="0 0 15 16" ><path d="M3.5 .5 H10.5 L13.5 3.5 V13.5 H3.5 Z" fill="url(#gPage)" stroke="#B08A38" stroke-width="1"/><path d="M10.5 .5 V3.5 H13.5" fill="#F3DFA0" stroke="#B08A38" stroke-width=".8"/><path d="M9 3.2 V8.8 Q9 10.6 7.2 10.4" fill="none" stroke="#2B66AC" stroke-width="1.6" stroke-linecap="round"/><path d="M3.4 7.4 L6.6 14.2 Q6.8 15 6 15 H0.8 Q0 15 0.2 14.2 Z" fill="url(#gWarn)" stroke="#E8961E" stroke-width=".7"/><rect x="2.9" y="9.6" width="1" height="2.8" fill="#3a2200"/><rect x="2.9" y="13" width="1" height="1" fill="#3a2200"/></svg>
<div class="t" style="left:53.90px;top:77px;color:#000;letter-spacing:0.376px;">Actor.java</div>
<svg class="a" style="left:136px;top:76px" width="15" height="16" viewBox="0 0 15 16" ><path d="M3.5 .5 H10.5 L13.5 3.5 V13.5 H3.5 Z" fill="url(#gPage)" stroke="#B08A38" stroke-width="1"/><path d="M10.5 .5 V3.5 H13.5" fill="#F3DFA0" stroke="#B08A38" stroke-width=".8"/><path d="M9 3.2 V8.8 Q9 10.6 7.2 10.4" fill="none" stroke="#2B66AC" stroke-width="1.6" stroke-linecap="round"/><path d="M3.4 7.4 L6.6 14.2 Q6.8 15 6 15 H0.8 Q0 15 0.2 14.2 Z" fill="url(#gWarn)" stroke="#E8961E" stroke-width=".7"/><rect x="2.9" y="9.6" width="1" height="2.8" fill="#3a2200"/><rect x="2.9" y="13" width="1" height="1" fill="#3a2200"/></svg>
<div class="t" style="left:154.90px;top:77px;color:#D4D0C8;letter-spacing:-0.076px;">ExpeditionGame.java</div>
<svg class="a" style="left:301px;top:76px" width="15" height="16" viewBox="0 0 15 16" ><path d="M3.5 .5 H10.5 L13.5 3.5 V13.5 H3.5 Z" fill="url(#gPage)" stroke="#B08A38" stroke-width="1"/><path d="M10.5 .5 V3.5 H13.5" fill="#F3DFA0" stroke="#B08A38" stroke-width=".8"/><path d="M9 3.2 V8.8 Q9 10.6 7.2 10.4" fill="none" stroke="#2B66AC" stroke-width="1.6" stroke-linecap="round"/><path d="M3.4 7.4 L6.6 14.2 Q6.8 15 6 15 H0.8 Q0 15 0.2 14.2 Z" fill="url(#gWarn)" stroke="#E8961E" stroke-width=".7"/><rect x="2.9" y="9.6" width="1" height="2.8" fill="#3a2200"/><rect x="2.9" y="13" width="1" height="1" fill="#3a2200"/></svg>
<div class="t" style="left:319.90px;top:77px;color:#000;letter-spacing:-0.137px;">ExpeditionConsoleUI.</div>
<svg class="a" style="left:454px;top:76px" width="15" height="16" viewBox="0 0 15 16" ><path d="M3.5 .5 H10.5 L13.5 3.5 V13.5 H3.5 Z" fill="url(#gPage)" stroke="#B08A38" stroke-width="1"/><path d="M10.5 .5 V3.5 H13.5" fill="#F3DFA0" stroke="#B08A38" stroke-width=".8"/><path d="M9 3.2 V8.8 Q9 10.6 7.2 10.4" fill="none" stroke="#2B66AC" stroke-width="1.6" stroke-linecap="round"/></svg>
<div class="t" style="left:472.90px;top:77px;color:#000;letter-spacing:-0.044px;">ExpeditionDAO.java</div>
<svg class="a" style="left:601px;top:76px" width="15" height="16" viewBox="0 0 15 16" ><path d="M3.5 .5 H10.5 L13.5 3.5 V13.5 H3.5 Z" fill="url(#gPage)" stroke="#B08A38" stroke-width="1"/><path d="M10.5 .5 V3.5 H13.5" fill="#F3DFA0" stroke="#B08A38" stroke-width=".8"/><path d="M9 3.2 V8.8 Q9 10.6 7.2 10.4" fill="none" stroke="#2B66AC" stroke-width="1.6" stroke-linecap="round"/><path d="M3.4 7.4 L6.6 14.2 Q6.8 15 6 15 H0.8 Q0 15 0.2 14.2 Z" fill="url(#gWarn)" stroke="#E8961E" stroke-width=".7"/><rect x="2.9" y="9.6" width="1" height="2.8" fill="#3a2200"/><rect x="2.9" y="13" width="1" height="1" fill="#3a2200"/></svg>
<div class="t" style="left:619.90px;top:77px;color:#000;letter-spacing:-0.048px;">ExpeditionCell.java</div>
<svg class="a" style="left:743px;top:76px" width="15" height="16" viewBox="0 0 15 16" ><path d="M3.5 .5 H10.5 L13.5 3.5 V13.5 H3.5 Z" fill="url(#gPage)" stroke="#B08A38" stroke-width="1"/><path d="M10.5 .5 V3.5 H13.5" fill="#F3DFA0" stroke="#B08A38" stroke-width=".8"/><path d="M9 3.2 V8.8 Q9 10.6 7.2 10.4" fill="none" stroke="#2B66AC" stroke-width="1.6" stroke-linecap="round"/><path d="M3.4 7.4 L6.6 14.2 Q6.8 15 6 15 H0.8 Q0 15 0.2 14.2 Z" fill="url(#gWarn)" stroke="#E8961E" stroke-width=".7"/><rect x="2.9" y="9.6" width="1" height="2.8" fill="#3a2200"/><rect x="2.9" y="13" width="1" height="1" fill="#3a2200"/></svg>
<div class="t" style="left:761.90px;top:77px;color:#000;letter-spacing:0.078px;">Expedition.java</div>
<svg class="a" style="left:868px;top:76px" width="15" height="16" viewBox="0 0 15 16" ><path d="M3.5 .5 H10.5 L13.5 3.5 V13.5 H3.5 Z" fill="url(#gPage)" stroke="#B08A38" stroke-width="1"/><path d="M10.5 .5 V3.5 H13.5" fill="#F3DFA0" stroke="#B08A38" stroke-width=".8"/><path d="M9 3.2 V8.8 Q9 10.6 7.2 10.4" fill="none" stroke="#2B66AC" stroke-width="1.6" stroke-linecap="round"/><path d="M3.4 7.4 L6.6 14.2 Q6.8 15 6 15 H0.8 Q0 15 0.2 14.2 Z" fill="url(#gWarn)" stroke="#E8961E" stroke-width=".7"/><rect x="2.9" y="9.6" width="1" height="2.8" fill="#3a2200"/><rect x="2.9" y="13" width="1" height="1" fill="#3a2200"/></svg>
<div class="t" style="left:886.90px;top:77px;color:#000;letter-spacing:0.177px;">Walk.java</div>
<svg class="a" style="left:966px;top:76px" width="15" height="16" viewBox="0 0 15 16" ><path d="M3.5 .5 H10.5 L13.5 3.5 V13.5 H3.5 Z" fill="url(#gPage)" stroke="#B08A38" stroke-width="1"/><path d="M10.5 .5 V3.5 H13.5" fill="#F3DFA0" stroke="#B08A38" stroke-width=".8"/><path d="M9 3.2 V8.8 Q9 10.6 7.2 10.4" fill="none" stroke="#2B66AC" stroke-width="1.6" stroke-linecap="round"/></svg>
<div class="t" style="left:984.40px;top:77px;color:#000;letter-spacing:0.080px;">ExpeditionUserInterf</div>
<svg class="a" style="left:1116px;top:76px" width="15" height="16" viewBox="0 0 15 16" ><path d="M3.5 .5 H10.5 L13.5 3.5 V13.5 H3.5 Z" fill="url(#gPage)" stroke="#B08A38" stroke-width="1"/><path d="M10.5 .5 V3.5 H13.5" fill="#F3DFA0" stroke="#B08A38" stroke-width=".8"/><path d="M9 3.2 V8.8 Q9 10.6 7.2 10.4" fill="none" stroke="#2B66AC" stroke-width="1.6" stroke-linecap="round"/></svg>
<div class="t" style="left:1135.40px;top:77px;color:#000;letter-spacing:0.111px;">TestSea.java</div>
<svg class="a" style="left:265px;top:78px" width="11" height="11" viewBox="0 0 11 11"><path d="M1.5 1.5 L9.5 9.5 M9.5 1.5 L1.5 9.5" stroke="#505050" stroke-width="3.4" stroke-linecap="square"/><path d="M1.5 1.5 L9.5 9.5 M9.5 1.5 L1.5 9.5" stroke="#fff" stroke-width="2" stroke-linecap="square"/></svg>
<svg class="a" style="left:1231px;top:75px" width="8" height="5" viewBox="0 0 8 5"><path d="M.5 .3 L2.7 2.5 L.5 4.7 M4 .3 L6.2 2.5 L4 4.7" fill="none" stroke="#000" stroke-width="1.2"/></svg>
<div class="t" style="left:1237.90px;top:76px;color:#000;letter-spacing:0.477px;transform:scaleX(0.88);transform-origin:0 0;">94</div>
<svg class="a" style="left:1374px;top:76px" width="10" height="4" viewBox="0 0 10 4" ><rect x=".5" y=".5" width="9" height="3" fill="#fff" stroke="#4A4A4A" stroke-width="1"/></svg>
<svg class="a" style="left:1391px;top:76px" width="9" height="9" viewBox="0 0 9 9" ><rect x="2.5" y=".5" width="6" height="5" fill="#fff" stroke="#5A5048" stroke-width="1"/><rect x="2.5" y=".5" width="6" height="1" fill="#5A5048"/><rect x=".5" y="3.5" width="6" height="5" fill="#fff" stroke="#5A5048" stroke-width="1"/><rect x=".5" y="3.5" width="6" height="1" fill="#5A5048"/></svg>
<div class="a" style="left:1377px;top:97px;width:16px;height:724px;background:#EAE8E4;background-image:repeating-conic-gradient(#fff 0 25%,#D4D0C8 0 50%);background-size:2px 2px;"></div>
<div class="btn" style="left:1377px;top:97px;width:16px;height:16px"></div>
<svg class="a" style="left:1381px;top:103px" width="7" height="4" viewBox="0 0 7 4" shape-rendering="crispEdges"><path d="M0 4 L3.5 0 L7 4 Z" fill="#000"/></svg>
<div class="btn" style="left:1377px;top:805px;width:16px;height:16px"></div>
<svg class="a" style="left:1381px;top:811px" width="7" height="4" viewBox="0 0 7 4" shape-rendering="crispEdges"><path d="M0 0 L7 0 L3.5 4 Z" fill="#000"/></svg>
<div class="btn" style="left:1377px;top:113px;width:16px;height:262px"></div>
<div class="a" style="left:1393px;top:97px;width:13px;height:740px;background:#D4D0C8"></div>
<div class="a" style="left:1396px;top:101px;width:8px;height:8px;background:#F3C12C;border:1px solid #D8D0B0"></div>
<div class="a" style="left:1395px;top:112px;width:11px;height:1px;background:#808080"></div>
<div class="a" style="left:1395px;top:137px;width:9px;height:5px;background:#FFFCE8;border:1px solid #FBE8A8"></div>
<div class="a" style="left:1395px;top:261px;width:9px;height:5px;background:#C4DAF4;border:1px solid #6AA4E4"></div>
<div class="a" style="left:1395px;top:298px;width:9px;height:5px;background:#C4DAF4;border:1px solid #6AA4E4"></div>
<div class="a" style="left:1395px;top:397px;width:9px;height:5px;background:#C4DAF4;border:1px solid #6AA4E4"></div>
<div class="a" style="left:1395px;top:434px;width:9px;height:5px;background:#C4DAF4;border:1px solid #6AA4E4"></div>
<div class="a" style="left:1395px;top:471px;width:9px;height:5px;background:#C4DAF4;border:1px solid #6AA4E4"></div>
<div class="a" style="left:1395px;top:508px;width:9px;height:5px;background:#C4DAF4;border:1px solid #6AA4E4"></div>
<div class="a" style="left:1395px;top:656px;width:9px;height:5px;background:#C4DAF4;border:1px solid #6AA4E4"></div>
<div class="a" style="left:34px;top:821px;width:1359px;height:16px;background:#D4D0C8"></div>
<div class="a" style="left:96px;top:821px;width:1266px;height:16px;background:#EAE8E4;background-image:repeating-conic-gradient(#fff 0 25%,#D4D0C8 0 50%);background-size:2px 2px;"></div>
<div class="btn" style="left:80px;top:821px;width:16px;height:16px"></div>
<svg class="a" style="left:86px;top:826px" width="4" height="7" viewBox="0 0 4 7" shape-rendering="crispEdges"><path d="M4 0 L0 3.5 L4 7 Z" fill="#fff"/></svg>
<svg class="a" style="left:85px;top:825px" width="4" height="7" viewBox="0 0 4 7" shape-rendering="crispEdges"><path d="M4 0 L0 3.5 L4 7 Z" fill="#808080"/></svg>
<div class="btn" style="left:1362px;top:821px;width:16px;height:16px"></div>
<svg class="a" style="left:1369px;top:826px" width="4" height="7" viewBox="0 0 4 7" shape-rendering="crispEdges"><path d="M0 0 L4 3.5 L0 7 Z" fill="#fff"/></svg>
<svg class="a" style="left:1368px;top:825px" width="4" height="7" viewBox="0 0 4 7" shape-rendering="crispEdges"><path d="M0 0 L4 3.5 L0 7 Z" fill="#808080"/></svg>
<div class="a" style="left:33px;top:844px;width:3px;height:18px;background:#fff;border-left:1px solid #fff;border-right:1px solid #808080;border-top:1px solid #fff;border-bottom:1px solid #808080"></div>
<svg class="a" style="left:47px;top:846px" width="16" height="15" viewBox="0 0 16 15" ><rect x="1.5" y="2.5" width="5" height="11" fill="url(#gWin)" stroke="#9A8A6A"/><rect x="1" y="2" width="6" height="2.4" fill="#3C7CD0"/><g transform="translate(8 0)"><path d="M3.5 -.2 L4.8 2.2 L7.2 3.5 L4.8 4.8 L3.5 7.2 L2.2 4.8 L-.2 3.5 L2.2 2.2 Z" fill="#D4AA22" stroke="#B08A18" stroke-width=".7"/><path d="M3.5 1 V6 M1 3.5 H6" stroke="#FFFBE0" stroke-width="1.2"/></g></svg>
<div class="a" style="left:688px;top:842px;width:2px;height:22px;border-left:1px solid #808080;border-right:1px solid #fff"></div>
<div class="a" style="left:777px;top:842px;width:2px;height:22px;border-left:1px solid #808080;border-right:1px solid #fff"></div>
<div class="a" style="left:861px;top:842px;width:2px;height:22px;border-left:1px solid #808080;border-right:1px solid #fff"></div>
<div class="a" style="left:947px;top:844px;width:3px;height:18px;background:#fff;border-left:1px solid #fff;border-right:1px solid #808080;border-top:1px solid #fff;border-bottom:1px solid #808080"></div>
<div class="t" style="left:694.90px;top:846px;color:#000;letter-spacing:0.078px;">Writable</div>
<div class="t" style="left:783.90px;top:846px;color:#000;letter-spacing:0.072px;">Smart Insert</div>
<div class="t" style="left:867.90px;top:846px;color:#000;letter-spacing:0.034px;">32 : 1</div>
<div class="a" style="left:1205px;top:842px;width:203px;height:25px;border:1.5px solid #fff;border-radius:4px 8px 8px 4px"></div>
<div class="a" style="left:1209px;top:846px;width:3px;height:18px;background:#fff;border-left:1px solid #fff;border-right:1px solid #808080;border-top:1px solid #fff;border-bottom:1px solid #808080"></div>
<svg class="a" style="left:1223px;top:851px" width="9" height="9" viewBox="0 0 9 9" ><rect x="2.5" y=".5" width="6" height="5" fill="#fff" stroke="#5A5048" stroke-width="1"/><rect x="2.5" y=".5" width="6" height="1" fill="#5A5048"/><rect x=".5" y="3.5" width="6" height="5" fill="#fff" stroke="#5A5048" stroke-width="1"/><rect x=".5" y="3.5" width="6" height="1" fill="#5A5048"/></svg>
<svg class="a" style="left:1243px;top:847px" width="14" height="15" viewBox="0 0 14 15" ><path d="M.5 .5 H11 L13.5 3 V6 L12.5 7.5 L13.5 9 V14.5 H.5 Z" fill="#EEF3FB" stroke="#6A86B8" stroke-width=".9"/><path d="M.5 7.5 H12.6 M7 .5 V14.5" stroke="#6A86B8" stroke-width=".8"/><circle cx="4" cy="3.8" r="2.3" fill="#E83A3A"/><path d="M4 9 L6.4 13.4 H1.6 Z" fill="#F2A024" stroke="#D8821E" stroke-width=".5"/></svg>
<div class="t" style="left:1267px;top:846px;font:bold 13px 'Liberation Sans';color:#2A72C0;line-height:16px;height:16px;transform:scaleX(.85);transform-origin:0 0">@</div>
<svg class="a" style="left:1289px;top:847px" width="15" height="16" viewBox="0 0 15 16" ><path d="M.5 .5 H7.5 L10.5 3.5 V13.5 H.5 Z" fill="#FBF6E6" stroke="#C8A85A" stroke-width=".9"/><path d="M5 3.5 Q3 5 3 7 Q3 9 5 10.5" fill="none" stroke="#3A6AB8" stroke-width="1"/><path d="M5.4 6 H8.4 M5.4 8 H8.4" stroke="#3A6AB8" stroke-width="1"/><path d="M6 11 H10.4 V9 L14.4 12.4 L10.4 15.6 V13.8 H6 Z" fill="#FFE07A" stroke="#C8861E" stroke-width=".8"/></svg>
<svg class="a" style="left:1313px;top:848px" width="14" height="13" viewBox="0 0 14 13" ><path d="M3 1 V12.4 M7 0 V12.4 M11 1 V12.4" stroke="#2A5AB0" stroke-width="1.2"/><ellipse cx="3" cy="7.6" rx="2.6" ry="1.8" fill="#7ACB4A" stroke="#3E8A22" stroke-width=".6"/><ellipse cx="7" cy="3" rx="2.6" ry="1.8" fill="#F2C42A" stroke="#B8861E" stroke-width=".6"/><ellipse cx="11" cy="8.6" rx="2.4" ry="1.7" fill="#6AA8F2" stroke="#2A5AB0" stroke-width=".6"/></svg>
<svg class="a" style="left:1334px;top:847px" width="16" height="16" viewBox="0 0 16 16" ><g transform="rotate(-38 8 8)"><rect x="-1.5" y="5.2" width="5" height="5.6" fill="#FFF6B0" stroke="#C8A03A" stroke-width=".6"/><path d="M-1.5 5.2 L-3 4.2 V11.8 L-1.5 10.8 Z" fill="#FFFDE8"/><rect x="3.5" y="4.8" width="4" height="6.4" fill="#9C98A8" stroke="#6E6A7A" stroke-width=".6"/><path d="M7.5 5.2 H15 Q17.5 8 15 10.8 H7.5 Z" fill="#F9D48A" stroke="#D8922A" stroke-width=".9"/><circle cx="13" cy="7.4" r=".8" fill="#2B4FA0"/></g></svg>
<svg class="a" style="left:1358px;top:847px" width="15" height="15" viewBox="0 0 16 16" ><g stroke="#1A4A3A" stroke-width="1.1" fill="none" stroke-linecap="round"><path d="M4.4 .6 V4 M8.5 1.6 L8.2 3.8 L7 4.4 M.2 3.9 H4 M.2 7 L2 7.2 L3.2 8.2 L3.4 11 L2.4 12 M6.6 11.6 V14 L5.4 15 M10.2 4.9 L12 5.2 L13.6 6 M12.2 9 L13.6 9.2 L14.6 10"/></g><ellipse cx="7.7" cy="8" rx="5" ry="3.3" transform="rotate(42 7.7 8)" fill="#A8DC88" stroke="#1E6A8A" stroke-width="1.3"/><path d="M6.6 6.6 L10.6 10.6" stroke="#58A848" stroke-width="1"/><circle cx="5" cy="5" r="1.5" fill="#E8F8D0"/><circle cx="5.4" cy="5.4" r=".8" fill="#2A7A1E"/></svg>
<svg class="a" style="left:1382px;top:848px" width="14" height="13" viewBox="0 0 14 13" ><rect x=".8" y=".8" width="12.4" height="9.4" rx="1" fill="#EAF2FC" stroke="#2A5FC0" stroke-width="1.6"/><path d="M3.4 4 H9.6 M3.4 6.4 H8" stroke="#3A6AB8" stroke-width="1"/><rect x="5" y="10.6" width="4" height="1.2" fill="#2A5FC0"/><rect x="2.6" y="11.6" width="8.8" height="1.4" fill="#2A5FC0"/></svg>
<div class="a" style="left:316px;top:193px;width:809px;height:513px;background:#D4D0C8;border:1px solid;border-color:#D4D0C8 #404040 #404040 #D4D0C8"></div>
<div class="a" style="left:317px;top:194px;width:807px;height:511px;border:1px solid;border-color:#fff #808080 #808080 #fff"></div>
<div class="a" style="left:318px;top:196px;width:804px;height:18px;background:linear-gradient(90deg,#0A246A,#A6CAF0)"></div>
<svg class="a" style="left:320px;top:197px" width="16" height="16" viewBox="0 0 16 16" ><path d="M7.2 .4 Q9.4 2.6 7.6 4.6 Q6.4 6 7.4 7.4" fill="none" stroke="#E8522A" stroke-width="1.3"/><path d="M9.8 1.8 Q11.2 3.4 9.8 5 Q9 6 9.8 7.2" fill="none" stroke="#F08A3A" stroke-width="1.1"/><path d="M2.4 7.8 H12 Q12.2 13 7.2 13 Q2.2 13 2.4 7.8 Z" fill="#F0EEFF" stroke="#8C8CF0" stroke-width="1"/><path d="M3 9.6 H11.4 M3.6 11.2 H10.8" stroke="#7A7AD0" stroke-width=".9"/><path d="M12 8.6 Q15.8 7.8 15 10.2 Q14 12 11.4 11.6" fill="none" stroke="#8C8CF0" stroke-width="1.1"/><path d="M.6 13.4 Q7.2 17.4 13.8 13.4" fill="none" stroke="#8C8CF0" stroke-width="1.3"/><path d="M1.6 14.6 L.4 15.8 M12.8 14.6 L14 15.8" stroke="#8C8CF0" stroke-width="1"/></svg>
<div class="t" style="left:337.40px;top:198px;color:#fff;font-weight:bold;-webkit-text-stroke:.25px;letter-spacing:0.330px;">Expedition</div>
<div class="btn" style="left:1070px;top:198px;width:16px;height:14px"></div><div class="a" style="left:1074px;top:207px;width:6px;height:2px;background:#000"></div>
<div class="btn" style="left:1086px;top:198px;width:16px;height:14px"></div><div class="a" style="left:1089px;top:200px;width:9px;height:9px;border:1px solid #808080;border-top:2px solid #808080;border-right-color:#fff;border-bottom-color:#fff"></div>
<div class="btn" style="left:1104px;top:198px;width:16px;height:14px"></div><svg class="a" style="left:1108px;top:201px" width="8" height="7" viewBox="0 0 8 7"><path d="M0 0h2l2 2 2-2h2L5 3.5 8 7H6L4 5 2 7H0l3-3.5z" fill="#000"/></svg>
<div class="a" style="left:318px;top:215px;width:804px;height:488px;background:#000"></div>
<div class="g te" style="left:359px;top:216px">/----------------\</div>
<div class="g te" style="left:649px;top:216px">/-----N-----\</div>
<div class="g te" style="left:889px;top:216px">/------------------\</div>
<div class="g te" style="left:359px;top:235px">|</div>
<div class="g" style="left:369px;top:235px">1492</div>
<div class="g te" style="left:529px;top:235px">|</div>
<div class="g te" style="left:889px;top:235px">|</div>
<div class="g te" style="left:1079px;top:235px">|</div>
<div class="g te" style="left:359px;top:254px">|</div>
<div class="g" style="left:369px;top:254px">Avgvst 21</div>
<div class="g te" style="left:529px;top:254px">|</div>
<div class="g te" style="left:889px;top:254px">|</div>
<div class="g te" style="left:1079px;top:254px">|</div>
<div class="g te" style="left:359px;top:273px">|</div>
<div class="g" style="left:369px;top:273px">Spain</div>
<div class="g te" style="left:529px;top:273px">|</div>
<div class="g te" style="left:889px;top:273px">|</div>
<div class="g te" style="left:1079px;top:273px">|</div>
<div class="g te" style="left:359px;top:292px">|</div>
<div class="g" style="left:369px;top:292px">Slash</div>
<div class="g te" style="left:529px;top:292px">|</div>
<div class="g te" style="left:889px;top:292px">|</div>
<div class="g te" style="left:1079px;top:292px">|</div>
<div class="g te" style="left:359px;top:311px">|</div>
<div class="g" style="left:369px;top:311px">Sailor</div>
<div class="g te" style="left:529px;top:311px">|</div>
<div class="g te" style="left:889px;top:311px">|</div>
<div class="g te" style="left:1079px;top:311px">|</div>
<div class="g te" style="left:359px;top:330px">|</div>
<div class="g" style="left:369px;top:330px">5000$</div>
<div class="g te" style="left:529px;top:330px">|</div>
<div class="g te" style="left:889px;top:330px">|</div>
<div class="g te" style="left:1079px;top:330px">|</div>
<div class="g te" style="left:639px;top:235px">/</div>
<div class="g ol" style="left:669px;top:235px">.........</div>
<div class="g te" style="left:779px;top:235px">\</div>
<div class="g te" style="left:629px;top:254px">/</div>
<div class="g ol" style="left:659px;top:254px">...........</div>
<div class="g te" style="left:789px;top:254px">\</div>
<div class="g te" style="left:539px;top:273px">\-------/</div>
<div class="g ol" style="left:639px;top:273px">...............</div>
<div class="g te" style="left:799px;top:273px">\-------/</div>
<div class="g te" style="left:609px;top:292px">/</div>
<div class="g ol" style="left:639px;top:292px">............</div>
<div class="g oh" style="left:759px;top:292px">###</div>
<div class="g te" style="left:809px;top:292px">\</div>
<div class="g te" style="left:609px;top:311px">|</div>
<div class="g ol" style="left:629px;top:311px">.............</div>
<div class="g rd" style="left:759px;top:311px">1</div>
<div class="g oh" style="left:769px;top:311px">##</div>
<div class="g ol" style="left:789px;top:311px">.</div>
<div class="g te" style="left:809px;top:311px">|</div>
<div class="g te" style="left:609px;top:330px">|</div>
<div class="g ol" style="left:619px;top:330px">..............</div>
<div class="g oh" style="left:759px;top:330px">###</div>
<div class="g ol" style="left:789px;top:330px">..</div>
<div class="g te" style="left:809px;top:330px">|</div>
<div class="g" style="left:909px;top:235px">Grass</div>
<div class="g te" style="left:909px;top:254px">LAT</div>
<div class="g" style="left:1019px;top:254px">37N</div>
<div class="g te" style="left:909px;top:273px">LONG</div>
<div class="g" style="left:1019px;top:273px">6W</div>
<div class="g" style="left:909px;top:292px">Sunny</div>
<div class="g te" style="left:909px;top:311px">Temp</div>
<div class="g" style="left:1019px;top:311px">12°C</div>
<div class="g te" style="left:329px;top:349px">/----~ EXPEDITION ~----\/----------------------------------------------------\</div>
<div class="g te" style="left:329px;top:368px">|</div>
<div class="g te" style="left:339px;top:368px">Food Days</div>
<div class="g" style="left:439px;top:368px">49days</div>
<div class="g te" style="left:559px;top:368px">||</div>
<div class="g te" style="left:1099px;top:368px">|</div>
<div class="g te" style="left:329px;top:387px">|</div>
<div class="g te" style="left:339px;top:387px">Power</div>
<div class="g" style="left:439px;top:387px">70</div>
<div class="g te" style="left:559px;top:387px">||</div>
<div class="g te" style="left:1099px;top:387px">|</div>
<div class="g te" style="left:329px;top:406px">|</div>
<div class="g te" style="left:339px;top:406px">Movement</div>
<div class="g" style="left:439px;top:406px">Ship</div>
<div class="g te" style="left:559px;top:406px">||</div>
<div class="g te" style="left:1099px;top:406px">|</div>
<div class="g te" style="left:329px;top:425px">|</div>
<div class="g te" style="left:339px;top:425px">Carrying</div>
<div class="g" style="left:439px;top:425px">2%</div>
<div class="g te" style="left:559px;top:425px">||</div>
<div class="g te" style="left:1099px;top:425px">|</div>
<div class="g" style="left:579px;top:368px">Hire 2 Captain for 240 maravedíes per month? (Y/n)</div>
<div class="g" style="left:579px;top:406px">a.</div>
<div class="g ol" style="left:599px;top:406px">V</div>
<div class="g" style="left:619px;top:406px">Carrack for 120$ (max 2461) {Stock:100}</div>
<div class="g" style="left:579px;top:425px">b.</div>
<div class="g ol" style="left:599px;top:425px">w</div>
<div class="g" style="left:619px;top:425px">Caravel for 120$ (max 2461) {Stock:100}</div>
<div class="g te" style="left:329px;top:444px">\----------------------/|</div>
<div class="g" style="left:579px;top:444px">c.</div>
<div class="g cy" style="left:599px;top:444px">@</div>
<div class="g" style="left:619px;top:444px">Captain, 120$/month (max 2461) {100 Available}</div>
<div class="g te" style="left:1099px;top:444px">|</div>
<div class="g te" style="left:329px;top:463px">|</div>
<div class="g te" style="left:559px;top:463px">||</div>
<div class="g te" style="left:1099px;top:463px">|</div>
<div class="g te" style="left:329px;top:482px">|</div>
<div class="g te" style="left:559px;top:482px">||</div>
<div class="g te" style="left:1099px;top:482px">|</div>
<div class="g te" style="left:329px;top:501px">|</div>
<div class="g te" style="left:559px;top:501px">||</div>
<div class="g te" style="left:1099px;top:501px">|</div>
<div class="g te" style="left:329px;top:520px">|</div>
<div class="g te" style="left:559px;top:520px">||</div>
<div class="g te" style="left:1099px;top:520px">|</div>
<div class="g te" style="left:329px;top:539px">|</div>
<div class="g te" style="left:559px;top:539px">||</div>
<div class="g te" style="left:1099px;top:539px">|</div>
<div class="g te" style="left:329px;top:558px">|</div>
<div class="g te" style="left:559px;top:558px">||</div>
<div class="g te" style="left:1099px;top:558px">|</div>
<div class="g te" style="left:329px;top:577px">|</div>
<div class="g te" style="left:559px;top:577px">||</div>
<div class="g te" style="left:1099px;top:577px">|</div>
<div class="g te" style="left:329px;top:596px">\----------------------/\----------------------------------------------------/</div>
<div class="g rd" style="left:329px;top:634px">Your expedition travels southwest</div>
<div class="a" style="left:0;top:871px;width:1440px;height:29px;background:#D4D0C8;border-top:1px solid #fff"></div>
<div class="a" style="left:2px;top:874px;width:54px;height:22px;background:#D4D0C8;border:1px solid;border-color:#fff #404040 #404040 #fff;box-shadow:inset -1px -1px 0 #808080"></div>
<svg class="a" style="left:4px;top:875.5px" width="16" height="16" viewBox="-0.5 1 16 15" ><path d="M1.2 3.6 Q3.6 1.6 7 3.2 L6.2 8 Q3.2 6.6 .6 8.2 Z" fill="#F0541E"/><path d="M8 3.4 Q11 4.6 14.6 2.6 L13.8 7.6 Q10.8 9.4 7.2 8.2 Z" fill="#6CCB1E"/><path d="M.4 9.2 Q3 7.6 6 9 L5.2 13.8 Q2.6 12.4 -.2 14 Z" fill="#3A6EF0"/><path d="M7 9.2 Q10.4 10.6 13.6 8.6 L12.8 13.4 Q9.6 15.2 6.2 14 Z" fill="#FAD00A"/></svg>
<div class="t" style="left:21.90px;top:878px;color:#000;font-weight:bold;-webkit-text-stroke:.25px;letter-spacing:0.393px;">Inicio</div>
<svg class="a" style="left:64px;top:878px" width="15" height="16" viewBox="0 0 15 16" ><rect x="1.2" y="1.8" width="11.6" height="12.4" rx="2.4" fill="#FBF3D0" stroke="#1E5AD0" stroke-width="2.2" transform="rotate(-5 7 8)"/><path d="M4.4 5.4 H9 L9.6 11 H5 Z" fill="#fff" stroke="#3A6AD0" stroke-width=".8"/><path d="M5.6 10.4 L10.4 4.8" stroke="#1E3A8A" stroke-width="1.2"/><path d="M11.4 4 L14.8 5 L12 6.4Z" fill="#E8522A"/></svg>
<svg class="a" style="left:86px;top:878px" width="16" height="16" viewBox="0 0 16 16" ><circle cx="8" cy="8" r="7.4" fill="#F4F4F4" stroke="#8A8A8A" stroke-width=".5"/><path d="M8 8 L8 .6 A7.4 7.4 0 0 1 15.4 8 Z" fill="#8CC63A"/><path d="M8 8 L15.4 8 A7.4 7.4 0 0 1 8 15.4 Z" fill="#F2B82A"/><path d="M8 8 L8 15.4 A7.4 7.4 0 0 1 .6 8 Z" fill="#3A7AE8"/><path d="M8 8 L.6 8 A7.4 7.4 0 0 1 8 .6 Z" fill="#E8622A"/><circle cx="8" cy="8" r="4.4" fill="#fff"/><path d="M6.4 5.4 L11 8 L6.4 10.6 Z" fill="#222"/></svg>
<svg class="a" style="left:110px;top:878px" width="16" height="16" viewBox="0 0 16 16" ><rect x=".5" y=".5" width="15" height="15" fill="#fff" stroke="#B8C0D0" stroke-width=".6"/><path d="M1.4 1.4 L7.4 7.4 L1.4 13 Z" fill="#A88AE0"/><path d="M2 1 H9 V8 Z" fill="#E8222A"/><rect x="9.8" y="1.4" width="4" height="9" fill="#F2A81E"/><rect x="5.4" y="11.4" width="9" height="3.4" fill="#2AB84A"/><path d="M1.4 14.6 V9.6 L5 14.6Z" fill="#2A62E8"/></svg>
<svg class="a" style="left:132px;top:878px" width="17" height="16" viewBox="0 0 17 16" ><path d="M13.6 6.4 Q13.6 2 8.4 2 Q3.4 2 3.4 8.4 Q3.4 14.4 8.6 14.4 Q12.6 14.4 13.4 11 H10.2 Q9.6 12 8.6 12 Q6.6 12 6.6 9.4 H13.6 Z M6.6 7 Q6.8 4.4 8.5 4.4 Q10.4 4.4 10.5 7 Z" fill="#2A7AE8" stroke="#1E5AB8" stroke-width=".4"/><path d="M1 11.6 Q-1.4 5 7 1.8 Q15 -1 16 3.4" fill="none" stroke="#4A9AF2" stroke-width="1.3"/></svg>
<svg class="a" style="left:156px;top:878px" width="17" height="16" viewBox="0 0 17 16" ><path d="M2.8 8.4 V15 H11.6 V8.4 L7.2 3.4 Z" fill="#FDFBF4"/><path d="M.6 8.6 L7.2 1.4 L11 5.6" fill="none" stroke="#B8862A" stroke-width="1.3"/><path d="M2.8 8 V15.2 M1.4 15.2 H12.6" stroke="#B8862A" stroke-width="1"/><rect x="7.6" y="10" width="2.8" height="5" fill="#E8B04A" stroke="#B8822A" stroke-width="1"/><rect x="4" y="8.4" width="2.4" height="2.4" fill="#fff" stroke="#B8862A" stroke-width=".8"/><circle cx="12.2" cy="4.2" r="3.5" fill="#3A76E0" stroke="#9AC0F4" stroke-width=".8"/><path d="M12.4 2 Q14.4 4.2 12.4 6.4 Z" fill="#fff"/></svg>
<svg class="a" style="left:179px;top:878px" width="16" height="16" viewBox="0 0 16 16" ><circle cx="8" cy="8" r="7.4" fill="#F0F0F0" stroke="#B0B0B0" stroke-width=".8"/><circle cx="8" cy="8" r="5.6" fill="#E02A2A"/><path d="M5 10.6 Q4.4 7 6.4 6 Q6.4 7.6 7.4 7.6 Q7 5 8.6 4 Q8.6 6.4 10.4 7 Q11.8 8.6 11 10.6 Q8 12 5 10.6Z" fill="#F8C8C0"/></svg>
<svg class="a" style="left:202px;top:878px" width="17" height="16" viewBox="0 0 17 16" ><circle cx="6.6" cy="7.4" r="5.8" fill="url(#gGlobe)" stroke="#8AB0D8" stroke-width=".6"/><path d="M3.4 4.6 Q6 3 7.6 5 Q6.6 8 4 8Z" fill="#8ACB5A"/><path d="M10.4 1.4 H14.4 L15.6 2.4 V14.6 H11.6 L10.4 13.6 Z" fill="#1E2A38" stroke="#3A4A5A" stroke-width=".5"/><path d="M14.4 1.4 V14.6" stroke="#4A6A9A" stroke-width=".8"/><path d="M6 11.4 L9.6 13 L6.4 14.6" fill="#3AB84A"/></svg>
<div class="a" style="left:237px;top:874px;width:143px;height:22px;background:#D4D0C8;border:1px solid;border-color:#fff #404040 #404040 #fff;box-shadow:inset -1px -1px 0 #808080"></div>
<svg class="a" style="left:240px;top:877px" width="16" height="16" viewBox="0 0 16 16" ><ellipse cx="8" cy="6.5" rx="7" ry="5.3" fill="#F4F4F4" stroke="#6A6A6A" stroke-width="1.1"/><path d="M4 10.5 L3 14.5 L8 11.5" fill="#F4F4F4" stroke="#6A6A6A" stroke-width="1"/></svg>
<div class="t" style="left:260.40px;top:878px;color:#000;letter-spacing:-0.269px;">Google Talk</div>
<div class="a" style="left:383px;top:874px;width:143px;height:22px;background:#D4D0C8;border:1px solid;border-color:#fff #404040 #404040 #fff;box-shadow:inset -1px -1px 0 #808080"></div>
<svg class="a" style="left:388px;top:877px" width="16" height="16" viewBox="0 0 16 16" ><ellipse cx="7.4" cy="8" rx="6.4" ry="6" fill="#E8A8D8"/><ellipse cx="8.6" cy="8" rx="6.6" ry="6.1" fill="url(#ec)"/><rect x="2" y="6.8" width="13.2" height="1" fill="#B8D0F4"/><rect x="2" y="9.3" width="13.2" height="1" fill="#B8D0F4"/></svg>
<div class="t" style="left:406.90px;top:878px;color:#000;letter-spacing:0.040px;">Java - Expedition/src...</div>
<div class="a" style="left:529px;top:874px;width:143px;height:22px;background:#D4D0C8;border:1px solid;border-color:#fff #404040 #404040 #fff;box-shadow:inset -1px -1px 0 #808080"></div>
<svg class="a" style="left:533px;top:877px" width="16" height="16" viewBox="0 0 16 16" ><rect x=".5" y="3" width="15" height="10" rx="3" fill="#E8ECF4" stroke="#6A7AA0" stroke-width=".8"/><text x="1.5" y="11.5" font-family="Liberation Sans" font-weight="bold" font-style="italic" font-size="9.5" fill="#3A4A78">cZ</text></svg>
<div class="t" style="left:552.90px;top:878px;color:#000;letter-spacing:0.018px;">slashie|7DRL on #rgr...</div>
<div class="a" style="left:675px;top:874px;width:143px;height:22px;background:#D4D0C8;border:1px solid;border-color:#fff #404040 #404040 #fff;box-shadow:inset -1px -1px 0 #808080"></div>
<svg class="a" style="left:679px;top:877px" width="16" height="16" viewBox="0 0 16 16" ><path d="M.6 3 Q.6 1.6 2 1.6 H6 L7.6 3.4 H14 Q15.2 3.4 15.2 4.6 V13 Q15.2 14.2 14 14.2 H2 Q.6 14.2 .6 13 Z" fill="#F7D872" stroke="#C8982A" stroke-width=".9"/><path d="M.8 13.4 L2.6 6.4 H15.6 L14.4 14 Z" fill="#FBE9A0" stroke="#C8982A" stroke-width=".8"/></svg>
<div class="t" style="left:698.40px;top:878px;color:#000;letter-spacing:0.059px;">distro</div>
<div class="a" style="left:822px;top:874px;width:143px;height:22px;background:#D4D0C8;border:1px solid;border-color:#fff #404040 #404040 #fff;box-shadow:inset -1px -1px 0 #808080"></div>
<svg class="a" style="left:826px;top:877px" width="16" height="16" viewBox="0 0 16 16" ><rect x="1" y="1.5" width="9" height="13" fill="#fff" stroke="#000" stroke-width="1"/><path d="M4 .8 H15.4 V4 H14 V2.6 H11 V12 H12.6 V13.6 H7.4 V12 H9 V2.6 H6 V4 H4 Z" fill="#1E3AC8" stroke="#000" stroke-width=".5"/><path d="M2.5 11 L7 9 L12 12 L9 15.5 H3 Z" fill="#F2D43A" stroke="#000" stroke-width=".6"/><path d="M7 9 L12 12 L10.6 13.6 L5.6 10.4Z" fill="#E84A2A"/><path d="M10 14 L12.6 15.4 L13.4 13.4Z" fill="#3AB8E8"/></svg>
<div class="t" style="left:846.40px;top:878px;color:#000;letter-spacing:0.103px;">TextPad - [E:\Proyec...</div>
<div class="a" style="left:969px;top:874px;width:143px;height:22px;background:#D4D0C8;border:1px solid;border-color:#fff #404040 #404040 #fff;box-shadow:inset -1px -1px 0 #808080"></div>
<svg class="a" style="left:973px;top:877px" width="16" height="16" viewBox="0 0 16 16" ><circle cx="6" cy="5.6" r="3.2" fill="#7CCB4A" stroke="#3E8A22" stroke-width=".7"/><path d="M.6 15 Q.6 8.8 6 8.8 Q11.4 8.8 11.4 15 Z" fill="#7CCB4A" stroke="#3E8A22" stroke-width=".7"/><path d="M9 1 H15.4 V5.4 H12 L10 7.4 V5.4 H9 Z" fill="#F4F8FF" stroke="#8AA8D8" stroke-width=".7"/></svg>
<div class="t" style="left:992.40px;top:878px;color:#000;letter-spacing:-0.135px;">MaLu * - Conversación</div>
<div class="a" style="left:1116px;top:874px;width:143px;height:22px;border:1px solid;border-color:#404040 #fff #fff #404040;box-shadow:inset 1px 1px 0 #808080;background:#EAE8E4;background-image:repeating-conic-gradient(#fff 0 25%,#D4D0C8 0 50%);background-size:2px 2px;"></div>
<svg class="a" style="left:1121px;top:878px" width="16" height="16" viewBox="0 0 16 16" ><path d="M7.2 .4 Q9.4 2.6 7.6 4.6 Q6.4 6 7.4 7.4" fill="none" stroke="#E8522A" stroke-width="1.3"/><path d="M9.8 1.8 Q11.2 3.4 9.8 5 Q9 6 9.8 7.2" fill="none" stroke="#F08A3A" stroke-width="1.1"/><path d="M2.4 7.8 H12 Q12.2 13 7.2 13 Q2.2 13 2.4 7.8 Z" fill="#F0EEFF" stroke="#3434A0" stroke-width="1"/><path d="M3 9.6 H11.4 M3.6 11.2 H10.8" stroke="#7A7AD0" stroke-width=".9"/><path d="M12 8.6 Q15.8 7.8 15 10.2 Q14 12 11.4 11.6" fill="none" stroke="#3434A0" stroke-width="1.1"/><path d="M.6 13.4 Q7.2 17.4 13.8 13.4" fill="none" stroke="#3434A0" stroke-width="1.3"/><path d="M1.6 14.6 L.4 15.8 M12.8 14.6 L14 15.8" stroke="#3434A0" stroke-width="1"/></svg>
<div class="t" style="left:1140.40px;top:879px;color:#000;font-weight:bold;-webkit-text-stroke:.25px;letter-spacing:0.274px;">Expedition</div>
<div class="a" style="left:1271px;top:878px;width:16px;height:16px;background:#0A246A"></div>
<div class="t" style="left:1272.10px;top:879px;color:#fff;letter-spacing:1.384px;transform:scaleX(0.84);transform-origin:0 0;">ES</div>
<div class="a" style="left:1291px;top:874px;width:2px;height:24px;border-left:1px solid #808080;border-right:1px solid #fff"></div>
<div class="a" style="left:1307px;top:874px;width:131px;height:24px;border:1px solid;border-color:#808080 #fff #fff #808080"></div>
<svg class="a" style="left:1312px;top:883px" width="9" height="6" viewBox="0 0 9 6"><path d="M3.5 .5 L1 3 L3.5 5.5 M7.5 .5 L5 3 L7.5 5.5" fill="none" stroke="#000" stroke-width="1.4"/></svg>
<svg class="a" style="left:1325px;top:878px" width="16" height="15" viewBox="0 0 16 15" ><ellipse cx="8" cy="6.4" rx="7.6" ry="6" fill="#F0F0F0" stroke="#8A8A8A" stroke-width=".9"/><path d="M5 11.4 L4.4 14.6 L8.4 12" fill="#F0F0F0" stroke="#8A8A8A" stroke-width=".8"/><path d="M2.6 10.4 V2.8 L8 7.4 L13.4 2.8 V10.4" fill="none" stroke="#E02A2A" stroke-width="2"/></svg>
<svg class="a" style="left:1343.5px;top:878px" width="14" height="16" viewBox="-1 0 14 16" ><circle cx="6" cy="5.6" r="3.2" fill="#7CCB4A" stroke="#3E8A22" stroke-width=".7"/><path d="M.6 15 Q.6 8.8 6 8.8 Q11.4 8.8 11.4 15 Z" fill="#7CCB4A" stroke="#3E8A22" stroke-width=".7"/></svg>
<svg class="a" style="left:1361px;top:878px" width="16" height="16" viewBox="0 0 16 16" ><path d="M2 2.4 L10 .6 V15.4 L2 13.6 Z" fill="#8A4AA8" stroke="#6A2A88" stroke-width=".5"/><rect x="4.4" y="3" width="10.6" height="11" fill="#F8F2FB" stroke="#B88AC8" stroke-width=".8"/><text x="6" y="12.4" font-family="Liberation Serif" font-style="italic" font-weight="bold" font-size="10.5" fill="#7A3A9A">n</text></svg>
<svg class="a" style="left:1379px;top:878px" width="16" height="16" viewBox="0 0 16 16" ><circle cx="8" cy="8" r="7.8" fill="#1E4A8A"/><path d="M1.4 4.6 A7.8 7.8 0 0 1 8 .2 L7 8 Z" fill="#6A9AD0" opacity=".6"/><text x="4.4" y="13" font-family="Liberation Serif" font-weight="bold" font-size="13" fill="#fff">a</text></svg>
<div class="t" style="left:1401.40px;top:878px;color:#000;letter-spacing:0.292px;">22:52</div>
</div></body></html>
